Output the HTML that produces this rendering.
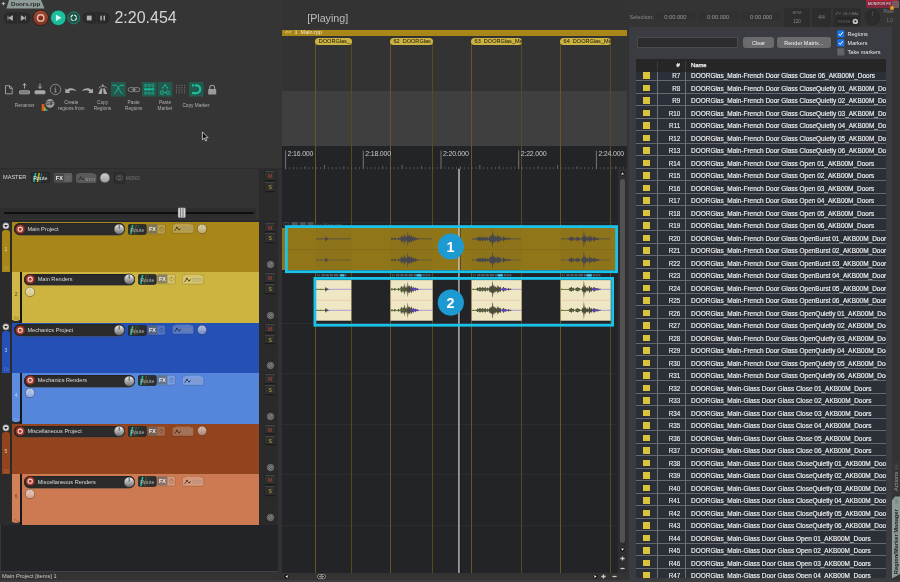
<!DOCTYPE html>
<html><head><meta charset="utf-8"><title>Doors.rpp</title>
<style>
html,body{margin:0;padding:0;background:#333;}
body{width:900px;height:582px;position:relative;overflow:hidden;font-family:"Liberation Sans",sans-serif;color:#ccc;}
.a{position:absolute;}
.t{position:absolute;white-space:nowrap;line-height:1;}
#w{position:absolute;left:0;top:0;width:900px;height:582px;will-change:transform;}
.pill{position:absolute;background:#2b2b2b;border-radius:7px;box-shadow:0 0.5px 0 #4a4a4a, inset 0 0.5px 1px #1c1c1c;}
.ms{position:absolute;width:10.2px;height:9.6px;background:#2f2f2f;border-top:0.6px solid #444;border-bottom:0.8px solid #1a1a1a;box-sizing:border-box;border-radius:1px;font-size:5px;line-height:8.4px;text-align:center;box-shadow:0 0 0 0.4px #222;}
.row{position:absolute;left:635.8px;width:250.2px;height:12.5px;background:#2b3038;border-bottom:1px solid #666a70;box-sizing:border-box;overflow:hidden;}
.row i{position:absolute;left:7.2px;top:3.4px;width:6.8px;height:6.5px;background:#d9c43c;}
.row b{position:absolute;left:21.4px;top:0;width:1px;height:13px;background:#6e7278;}
.row u{position:absolute;left:49.1px;top:0;width:1px;height:13px;background:#6e7278;}
.row s{position:absolute;right:205.8px;top:4.3px;font-size:6.3px;line-height:1;color:#ececec;text-decoration:none;-webkit-text-stroke:0.15px #ececec;}
.row em{position:absolute;left:55.2px;top:4.3px;font-size:6.47px;line-height:1;color:#f2f2f2;font-style:normal;white-space:nowrap;-webkit-text-stroke:0.15px #f2f2f2;}
.btn{position:absolute;border-radius:3px;box-sizing:border-box;}
</style></head><body><div id="w">

<div class="a" style="left:0;top:0;width:282px;height:168.6px;background:#353535;"></div>
<svg class="a" style="left:0;top:0" width="60" height="10"><path d="M6.5 8.5 L9 0 L41 0 L44.5 8.5 Z" fill="#8d9b98"/><path d="M1.6 3.6h3.6M3.4 1.8v3.6" stroke="#d0d0d0" stroke-width="0.8"/></svg>
<div class="t" style="left:11px;top:1.3px;font-size:6.1px;color:#262626;font-weight:bold;">Doors.rpp</div>
<svg class="a" style="left:0;top:8px" width="115" height="22">
<rect x="2.9" y="3.8" width="28.2" height="12.4" rx="6.2" fill="#2a2a2a" stroke="#3d3d3d" stroke-width="0.6"/>
<line x1="17.5" y1="5" x2="17.5" y2="16" stroke="#3a3a3a" stroke-width="0.5"/>
<path d="M8 7.7v4.6M8.8 10l3.6-2.3v4.6z" stroke="#b4b4b4" stroke-width="0.8" fill="#b4b4b4"/>
<path d="M25.6 7.7v4.6M24.8 10l-3.6-2.3v4.6z" stroke="#b4b4b4" stroke-width="0.8" fill="#b4b4b4"/>
<defs><linearGradient id="rg" x1="0" y1="0" x2="0" y2="1"><stop offset="0" stop-color="#a04a32"/><stop offset="1" stop-color="#7e3220"/></linearGradient></defs>
<circle cx="40.7" cy="9.9" r="7.8" fill="url(#rg)"/><circle cx="40.7" cy="9.9" r="7.8" fill="none" stroke="#261a16" stroke-width="0.8"/>
<circle cx="40.7" cy="9.9" r="3.2" fill="#8a2c1a" stroke="#e4c0b4" stroke-width="1.4"/>
<circle cx="58.3" cy="9.8" r="7.7" fill="#1bbf9d"/><circle cx="58.3" cy="9.8" r="7.7" fill="none" stroke="#2a2022" stroke-width="0.6"/>
<path d="M55.9 6.4l5.6 3.4-5.6 3.4z" fill="#e6faf4" fill-opacity=".92"/>
<circle cx="73.7" cy="9.8" r="6" fill="#215248" stroke="#1b8f78" stroke-width="0.8"/>
<circle cx="73.7" cy="9.8" r="2.8" fill="none" stroke="#dcebe7" stroke-width="1.2" stroke-dasharray="3.4 1 3.4 1"/>
<rect x="81.7" y="3.8" width="28.7" height="12.4" rx="6.2" fill="#2a2a2a" stroke="#3d3d3d" stroke-width="0.6"/>
<line x1="96.3" y1="5" x2="96.3" y2="16" stroke="#3a3a3a" stroke-width="0.5"/>
<rect x="86.8" y="7.6" width="4.8" height="4.8" fill="#b0b0b0"/>
<rect x="100.3" y="7.6" width="1.5" height="4.8" fill="#b0b0b0"/><rect x="103.5" y="7.6" width="1.5" height="4.8" fill="#b0b0b0"/>
</svg>
<div class="t" style="left:114.4px;top:10.4px;font-size:16px;color:#d4d4d4;">2:20.454</div>
<svg class="a" style="left:0;top:80px" width="225" height="20" fill="none" stroke="#a8a8a8" stroke-width="0.9">
<path d="M5.5 5.7h4.3l2.4 2.4v5.7H5.5z"/><path d="M9.6 5.9v2.4h2.4"/>
<path d="M24.5 3.5v5M22.7 5.5l1.8-2 1.8 2" stroke-width="1"/><rect x="19.5" y="10.8" width="10" height="3" rx="0.6" fill="#777"/>
<path d="M40 3.5v5M38.2 6.5l1.8 2 1.8-2" stroke-width="1"/><rect x="35" y="10.8" width="10" height="3" rx="0.6" fill="#aaa"/>
<circle cx="55.5" cy="9.5" r="5.2" stroke-width="0.7"/><path d="M55.5 6.6v0.8M54.6 8.8h1v3M54.4 12h2.2" stroke-width="0.8"/>
<path d="M65.3 8.4V12.9H70.2L68.7 11.4C70.6 9.9 73.6 9.7 76.4 11.2C74.2 8 70 7.4 67 9.8Z" fill="#a8a8a8" stroke="none"/>
<path d="M93 8.4V12.9H88.1L89.6 11.4C87.7 9.9 84.7 9.7 81.9 11.2C84.1 8 88.3 7.4 91.3 9.8Z" fill="#a8a8a8" stroke="none"/>
<path d="M100.8 8.2l-2.6 5.8h3.7l0.5-5.5zM104.7 8.2l2.6 5.8h-3.7l-0.5-5.5z" fill="#a8a8a8" stroke="none"/><path d="M98.5 8.3c1.5-2.5 7-2.5 8.5 0" stroke-width="0.8"/><circle cx="102.7" cy="5.2" r="0.9" fill="#a8a8a8" stroke="none"/>
<rect x="111" y="2" width="14.6" height="14.6" fill="#245a4e" stroke="none"/>
<path d="M112.5 5.3h3c3 0 4.5 8.3 7 8.3M124 5.3h-3c-3 0-4.5 8.3-7 8.3" stroke="#1bbf9d" stroke-width="0.9"/>
<rect x="128.2" y="7.6" width="6.6" height="4" rx="2" stroke="#949494" stroke-width="0.8"/><rect x="133.2" y="7.6" width="6.6" height="4" rx="2" stroke="#949494" stroke-width="0.8"/><path d="M131.5 9.6h5" stroke="#949494" stroke-width="0.7"/>
<rect x="142" y="2" width="14.6" height="14.6" fill="#245a4e" stroke="none"/>
<g fill="none" stroke="#1bbf9d" stroke-width="0.7"><rect x="144.6" y="4.3" width="2.1" height="2.1" rx="0.5"/><rect x="144.6" y="8.2" width="2.1" height="2.1" rx="0.5"/><rect x="144.6" y="12.1" width="2.1" height="2.1" rx="0.5"/><rect x="148.2" y="4.3" width="2.1" height="2.1" rx="0.5"/><rect x="148.2" y="8.2" width="2.1" height="2.1" rx="0.5"/><rect x="148.2" y="12.1" width="2.1" height="2.1" rx="0.5"/><rect x="151.8" y="4.3" width="2.1" height="2.1" rx="0.5"/><rect x="151.8" y="8.2" width="2.1" height="2.1" rx="0.5"/><rect x="151.8" y="12.1" width="2.1" height="2.1" rx="0.5"/><path d="M144.6 9.25h9.3" stroke-width="1.3"/></g>
<rect x="157.8" y="2" width="14.6" height="14.6" fill="#245a4e" stroke="none"/>
<g stroke="#1bbf9d" stroke-width="0.8"><circle cx="162" cy="12.6" r="1.7"/><circle cx="168" cy="12.6" r="1.7"/><path d="M163.7 12.6h2.6" /><path d="M162.6 7.9l2.4-2.8 2.4 2.8" stroke-width="0.9"/><circle cx="165" cy="5" r="0.8" fill="#1bbf9d" stroke="none"/><circle cx="162.6" cy="7.9" r="0.7" fill="#1bbf9d" stroke="none"/><circle cx="167.4" cy="7.9" r="0.7" fill="#1bbf9d" stroke="none"/></g>
<g stroke="#8a8a8a" stroke-width="0.8" stroke-dasharray="1 1.2"><path d="M176.5 5v9M179.2 5v9M181.9 5v9M184.6 5v9"/></g>
<rect x="189" y="2" width="14.6" height="14.6" fill="#245a4e" stroke="none"/>
<path d="M192 5.4h4.3a3.9 3.9 0 0 1 0 7.8H192" stroke="#1bbf9d" stroke-width="2.2" stroke-dasharray="2.2 0.8 30"/>
<rect x="208.2" y="9" width="8" height="5.6" rx="0.6" fill="#9a9a9a" stroke="none"/><path d="M209.8 9V7.6a2.4 2.4 0 0 1 4.8 0V9" stroke="#9a9a9a" stroke-width="1.1"/>
</svg>
<div class="t" style="left:-5.399999999999999px;width:60px;text-align:center;top:103.7px;font-size:4.75px;color:#b0b0b0;">Renamer</div>
<div class="t" style="left:41.3px;width:60px;text-align:center;top:100.7px;font-size:4.75px;color:#b0b0b0;">Create</div>
<div class="t" style="left:41.3px;width:60px;text-align:center;top:106.9px;font-size:4.75px;color:#b0b0b0;">regions from</div>
<div class="t" style="left:72.5px;width:60px;text-align:center;top:100.7px;font-size:4.75px;color:#b0b0b0;">Copy</div>
<div class="t" style="left:72.5px;width:60px;text-align:center;top:106.9px;font-size:4.75px;color:#b0b0b0;">Regions</div>
<div class="t" style="left:103.69999999999999px;width:60px;text-align:center;top:100.7px;font-size:4.75px;color:#b0b0b0;">Paste</div>
<div class="t" style="left:103.69999999999999px;width:60px;text-align:center;top:106.9px;font-size:4.75px;color:#b0b0b0;">Regions</div>
<div class="t" style="left:135px;width:60px;text-align:center;top:100.7px;font-size:4.75px;color:#b0b0b0;">Paste</div>
<div class="t" style="left:135px;width:60px;text-align:center;top:106.9px;font-size:4.75px;color:#b0b0b0;">Marker</div>
<div class="t" style="left:166px;width:60px;text-align:center;top:103.7px;font-size:4.75px;color:#b0b0b0;">Copy Marker</div>
<svg class="a" style="left:41px;top:98px" width="15" height="14"><defs><linearGradient id="rb" x1="0" x2="1"><stop offset="0" stop-color="#e03a1e"/><stop offset="0.3" stop-color="#f0c020"/><stop offset="0.55" stop-color="#38b040"/><stop offset="0.8" stop-color="#2070d0"/><stop offset="1" stop-color="#6030b0"/></linearGradient></defs>
<path d="M0.8 6v7h7z" fill="url(#rb)"/><path d="M0.8 6h2.5v7h-2.5z" fill="#e05a1e"/><circle cx="9" cy="5.5" r="4.4" fill="#9a9a9a"/><text x="9" y="7.2" font-size="4.6" fill="#333" text-anchor="middle" font-family="Liberation Sans, sans-serif" font-weight="bold">GIF</text></svg>
<svg class="a" style="left:200px;top:129px" width="12" height="16"><path d="M2.4 2.9v7.9l1.9-1.7 1.3 2.9 1.2-0.5-1.3-2.8h2.6z" fill="#0a0a0a" stroke="#e4e4e4" stroke-width="0.75" stroke-linejoin="round"/></svg>
<div class="a" style="left:0;top:168.2px;width:282px;height:0.8px;background:#2c2c2c;"></div>
<div class="a" style="left:0;top:169px;width:259px;height:50.5px;background:#333;"></div>
<div class="a" style="left:0;top:219.5px;width:277.6px;height:2.2px;background:#26282b;"></div>
<div class="t" style="left:3px;top:174.5px;font-size:5.6px;color:#d8d8d8;">MASTER</div>
<svg class="a" style="left:31px;top:172.4px" width="19" height="12"><rect x="0.3" y="0.3" width="18" height="10.2" rx="1.8" fill="#2c2f2e" stroke="#1c1c1c" stroke-width="0.6"/>
<path d="M4.7 0.8l-1.9 9.4" stroke="#1bbf9d" stroke-width="1.5"/><path d="M8.3 0.8l-1.9 9.4" stroke="#d4b81e" stroke-width="1.4"/><path d="M10.8 0.8l-1.9 9.4" stroke="#1e6f98" stroke-width="1"/>
<text x="9.3" y="7.6" font-size="5.3" fill="#e8e8e8" text-anchor="middle" font-family="Liberation Sans, sans-serif">Route</text></svg>
<svg class="a" style="left:53.5px;top:173.4px" width="19" height="10"><rect x="0.3" y="0.3" width="17.6" height="8.8" rx="1.4" fill="#5e5e5e" stroke="#707070" stroke-width="0.5"/><path d="M0.6 1.2q0-0.6 0.6-0.6h8.8v8.2h-8.8q-0.6 0-0.6-0.6z" fill="#484848"/>
<text x="5.3" y="6.8" font-size="5.4" fill="#eee" text-anchor="middle" font-weight="bold" font-family="Liberation Sans, sans-serif">FX</text><circle cx="14" cy="4.9" r="1.8" fill="none" stroke="#787878" stroke-width="0.6"/><path d="M14 2.6v1.9" stroke="#787878" stroke-width="0.6"/></svg>
<svg class="a" style="left:75.5px;top:173px" width="22" height="11"><path d="M0.4 2.2q0-1 1-1h1.5l0.7-0.9h13.2l0.7 0.9h1.5q1 0 1 1v6.2q0 1-1 1h-17.6q-1 0-1-1z" fill="#5a5a5a" stroke="#6c6c6c" stroke-width="0.5"/>
<path d="M2.3 7.4l2.3-3 2 2 1.8-1.3" fill="none" stroke="#2a2a2a" stroke-width="0.9"/><circle cx="4.6" cy="4.4" r="0.8" fill="#2a2a2a"/><circle cx="6.6" cy="6.4" r="0.7" fill="#2a2a2a"/>
<text x="14.3" y="7.5" font-size="6.2" fill="#8e8e8e" text-anchor="middle" font-family="Liberation Sans, sans-serif">trim</text></svg>
<svg class="a" style="left:99.39999999999999px;top:172.0px" width="11.8" height="11.8"><defs><linearGradient id="k1053_1779" x1="0" y1="0" x2="0" y2="1"><stop offset="0" stop-color="#d2d2d2"/><stop offset="1" stop-color="#9c9c9c"/></linearGradient></defs><circle cx="5.9" cy="5.9" r="4.9" fill="url(#k1053_1779)" stroke="#4a4a4a" stroke-width="0.6"/></svg>
<svg class="a" style="left:113.8px;top:171.7px" width="12" height="13"><rect x="0.4" y="0.4" width="10.2" height="11" rx="1.5" fill="#2e2e2e" stroke="#262626" stroke-width="0.6"/><circle cx="4.4" cy="5.9" r="2.2" fill="none" stroke="#707070" stroke-width="0.6"/><circle cx="6.6" cy="5.9" r="2.2" fill="none" stroke="#707070" stroke-width="0.6"/></svg>
<div class="t" style="left:126px;top:176.8px;font-size:4.5px;color:#787878;">MONO</div>
<div class="a" style="left:0px;top:207.5px;width:256.3px;height:11.4px;background:#2d2d2d;"></div>
<div class="a" style="left:4px;top:212.3px;width:250px;height:1.6px;background:#0e0e0e;border-radius:1px;"></div>
<svg class="a" style="left:177px;top:207px" width="10" height="12"><rect x="1" y="0.8" width="7.6" height="10" rx="1" fill="#d6d6d6" stroke="#555" stroke-width="0.5"/><path d="M3.6 1.5v8.6M6 1.5v8.6" stroke="#444" stroke-width="0.7"/></svg>
<div class="a" style="left:259px;top:169px;width:18.6px;height:50.5px;background:#2b2b2b;"></div>
<div class="a" style="left:259px;top:221.7px;width:18.6px;height:303.5px;background:#2a2a2a;"></div>
<div class="a" style="left:259px;top:525.2px;width:18.6px;height:45.6px;background:#222428;"></div>
<div class="a" style="left:277.6px;top:169px;width:4.4px;height:413px;background:#313131;"></div>
<div class="ms" style="left:265px;top:171.3px;color:#c0463a;">M</div>
<div class="ms" style="left:265px;top:182.10000000000002px;color:#c4b03a;">S</div>
<div class="a" style="left:0;top:221.7px;width:12px;height:303.5px;background:#2b2b2b;"></div>
<div class="a" style="left:12px;top:221.7px;width:247px;height:50.55px;background:#a88618;"></div>
<div class="a" style="left:1.5px;top:230.2px;width:8.8px;height:42.05px;background:#a88618;border-radius:3px 3px 0 0;"></div>
<div class="t" style="left:1.5px;width:8.8px;text-align:center;top:246.89999999999998px;font-size:5px;color:rgba(255,255,255,.7);">1</div>
<svg class="a" style="left:3.6px;top:266.3px" width="5" height="4"><path d="M0.4 0.6h1.4l0.5 0.6h1.9v2.1h-3.8z" fill="none" stroke="#fff" stroke-opacity=".3" stroke-width="0.45"/></svg>
<svg class="a" style="left:1.5px;top:222.0px" width="8" height="8"><circle cx="3.9" cy="3.9" r="3.3" fill="#ddd" stroke="#222" stroke-width="0.5"/><path d="M2.1 2.9h3.6L3.9 5.6z" fill="#222"/></svg>
<div class="pill" style="left:14px;top:223.29999999999998px;width:110.5px;height:11.6px;"></div>
<svg class="a" style="left:15px;top:223.6px" width="11" height="11"><circle cx="5.2" cy="5.2" r="4.8" fill="#a63a2c" stroke="#3a1a14" stroke-width="0.6"/><circle cx="5.2" cy="5.2" r="2.1" fill="none" stroke="#f0d8d2" stroke-width="1.1"/></svg>
<div class="t" style="left:27.4px;top:226.79999999999998px;font-size:5.6px;color:#dcdcdc;">Main Project</div>
<svg class="a" style="left:112.8px;top:222.9px" width="12.4" height="12.4"><defs><linearGradient id="k1190_2291" x1="0" y1="0" x2="0" y2="1"><stop offset="0" stop-color="#f2f2f2"/><stop offset="1" stop-color="#6a6a6a"/></linearGradient></defs><circle cx="6.2" cy="6.2" r="5.2" fill="url(#k1190_2291)" stroke="#222" stroke-width="0.6"/><path d="M6.2 1.5v4.2" stroke="#333" stroke-width="0.8"/></svg>
<svg class="a" style="left:128px;top:223.6px" width="19" height="12"><rect x="0.3" y="0.3" width="18" height="10.2" rx="1.8" fill="#2c2f2e" stroke="#1c1c1c" stroke-width="0.6"/>
<path d="M4.7 0.8l-1.9 9.4" stroke="#1bbf9d" stroke-width="1.5"/><path d="M8.3 0.8l-1.9 9.4" stroke="#6e5c1c" stroke-width="1.4" stroke-dasharray="1.6 0.9"/><path d="M10.8 0.8l-1.9 9.4" stroke="#27506a" stroke-width="1" stroke-dasharray="1.6 0.9"/>
<text x="9.3" y="7.6" font-size="5.3" fill="#b4b4b4" text-anchor="middle" font-family="Liberation Sans, sans-serif">Route</text></svg>
<svg class="a" style="left:146.8px;top:223.7px" width="19" height="12"><rect x="0.3" y="0.3" width="18" height="9.6" rx="1.5" fill="#fff" fill-opacity=".2" stroke="#000" stroke-opacity=".25" stroke-width="0.6"/><path d="M0.6 1.2q0-0.6 0.6-0.6h9.2v9h-9.2q-0.6 0-0.6-0.6z" fill="#5a5a5a" fill-opacity=".62"/>
<text x="5.4" y="7.2" font-size="5.4" fill="#ececec" text-anchor="middle" font-weight="bold" font-family="Liberation Sans, sans-serif">FX</text><circle cx="14.5" cy="5.3" r="1.9" fill="none" stroke="#000" stroke-opacity=".28" stroke-width="0.6"/><path d="M14.5 2.8v2" stroke="#000" stroke-opacity=".28" stroke-width="0.6"/></svg>
<svg class="a" style="left:172px;top:223.29999999999998px" width="23" height="12"><path d="M0.4 2.2q0-1 1-1h1.6l0.8-0.9h14.6l0.8 0.9h1.5q1 0 1 1v6.9q0 1-1 1h-19.3q-1 0-1-1z" fill="#fff" fill-opacity=".22" stroke="#000" stroke-opacity=".25" stroke-width="0.6"/>
<path d="M2.5 8l2.4-3.4 2.1 2.2 1.9-1.4" fill="none" stroke="#222" stroke-opacity=".75" stroke-width="0.9"/><circle cx="4.9" cy="4.6" r="0.85" fill="#222" fill-opacity=".8"/><circle cx="7" cy="6.8" r="0.7" fill="#222" fill-opacity=".8"/>
<text x="15.3" y="7.9" font-size="6.4" fill="#8c8c8c" fill-opacity=".62" text-anchor="middle" font-family="Liberation Sans, sans-serif">trim</text></svg>
<svg class="a" style="left:196.2px;top:223.2px" width="12" height="12"><defs><linearGradient id="pg1" x1="0" y1="0" x2="0" y2="1"><stop offset="0" stop-color="#fff" stop-opacity=".7"/><stop offset="1" stop-color="#ddd" stop-opacity=".38"/></linearGradient></defs><circle cx="6" cy="6" r="4.7" fill="url(#pg1)" stroke="#000" stroke-opacity=".42" stroke-width="0.7"/><path d="M6 2v3" stroke="#000" stroke-opacity=".2" stroke-width="0.8"/></svg>
<div class="ms" style="left:265px;top:222.6px;color:#c0463a;">M</div>
<div class="ms" style="left:265px;top:233.4px;color:#c4b03a;">S</div>
<svg class="a" style="left:265.9px;top:260.3px" width="9" height="9"><circle cx="4.5" cy="4.5" r="3.2" fill="#545454" stroke="#969696" stroke-width="0.55"/><circle cx="4.5" cy="4.5" r="1.7" fill="none" stroke="#c8c8c8" stroke-opacity=".55" stroke-width="0.55"/><path d="M3 6l3-3" stroke="#d8d8d8" stroke-opacity=".6" stroke-width="0.55"/></svg>
<div class="a" style="left:12px;top:272.25px;width:247px;height:50.55px;background:#cdb440;"></div>
<div class="a" style="left:12px;top:319.8px;width:8.3px;height:3px;background:#2b2b2b;"></div>
<div class="a" style="left:12px;top:272.25px;width:8.3px;height:48.949999999999996px;background:#cfb848;border-radius:0 0 3.5px 3.5px;"></div>
<div class="a" style="left:20.3px;top:272.25px;width:1.8px;height:50.55px;background:#16181c;"></div>
<div class="t" style="left:12px;width:8.3px;text-align:center;top:292.05px;font-size:5px;color:rgba(50,45,20,.8);">2</div>
<svg class="a" style="left:14px;top:316.45px" width="5" height="4"><path d="M0.4 0.6h1.4l0.5 0.6h1.9v2.1h-3.8z" fill="none" stroke="rgba(50,45,20,.8)" stroke-opacity=".6" stroke-width="0.45"/></svg>
<div class="pill" style="left:24.3px;top:273.85px;width:110.5px;height:11.6px;"></div>
<svg class="a" style="left:25.3px;top:274.15px" width="11" height="11"><circle cx="5.2" cy="5.2" r="4.8" fill="#a63a2c" stroke="#3a1a14" stroke-width="0.6"/><circle cx="5.2" cy="5.2" r="2.1" fill="none" stroke="#f0d8d2" stroke-width="1.1"/></svg>
<div class="t" style="left:37.7px;top:277.35px;font-size:5.6px;color:#dcdcdc;">Main Renders</div>
<svg class="a" style="left:123.10000000000001px;top:273.45px" width="12.4" height="12.4"><defs><linearGradient id="k1293_2796" x1="0" y1="0" x2="0" y2="1"><stop offset="0" stop-color="#f2f2f2"/><stop offset="1" stop-color="#6a6a6a"/></linearGradient></defs><circle cx="6.2" cy="6.2" r="5.2" fill="url(#k1293_2796)" stroke="#222" stroke-width="0.6"/><path d="M6.2 1.5v4.2" stroke="#333" stroke-width="0.8"/></svg>
<svg class="a" style="left:138.3px;top:274.15px" width="19" height="12"><rect x="0.3" y="0.3" width="18" height="10.2" rx="1.8" fill="#2c2f2e" stroke="#1c1c1c" stroke-width="0.6"/>
<path d="M4.7 0.8l-1.9 9.4" stroke="#1bbf9d" stroke-width="1.5"/><path d="M8.3 0.8l-1.9 9.4" stroke="#6e5c1c" stroke-width="1.4" stroke-dasharray="1.6 0.9"/><path d="M10.8 0.8l-1.9 9.4" stroke="#27506a" stroke-width="1" stroke-dasharray="1.6 0.9"/>
<text x="9.3" y="7.6" font-size="5.3" fill="#b4b4b4" text-anchor="middle" font-family="Liberation Sans, sans-serif">Route</text></svg>
<svg class="a" style="left:157.10000000000002px;top:274.25px" width="19" height="12"><rect x="0.3" y="0.3" width="18" height="9.6" rx="1.5" fill="#fff" fill-opacity=".2" stroke="#000" stroke-opacity=".25" stroke-width="0.6"/><path d="M0.6 1.2q0-0.6 0.6-0.6h9.2v9h-9.2q-0.6 0-0.6-0.6z" fill="#5a5a5a" fill-opacity=".62"/>
<text x="5.4" y="7.2" font-size="5.4" fill="#ececec" text-anchor="middle" font-weight="bold" font-family="Liberation Sans, sans-serif">FX</text><circle cx="14.5" cy="5.3" r="1.9" fill="none" stroke="#000" stroke-opacity=".28" stroke-width="0.6"/><path d="M14.5 2.8v2" stroke="#000" stroke-opacity=".28" stroke-width="0.6"/></svg>
<svg class="a" style="left:182.3px;top:273.85px" width="23" height="12"><path d="M0.4 2.2q0-1 1-1h1.6l0.8-0.9h14.6l0.8 0.9h1.5q1 0 1 1v6.9q0 1-1 1h-19.3q-1 0-1-1z" fill="#fff" fill-opacity=".22" stroke="#000" stroke-opacity=".25" stroke-width="0.6"/>
<path d="M2.5 8l2.4-3.4 2.1 2.2 1.9-1.4" fill="none" stroke="#222" stroke-opacity=".75" stroke-width="0.9"/><circle cx="4.9" cy="4.6" r="0.85" fill="#222" fill-opacity=".8"/><circle cx="7" cy="6.8" r="0.7" fill="#222" fill-opacity=".8"/>
<text x="15.3" y="7.9" font-size="6.4" fill="#8c8c8c" fill-opacity=".62" text-anchor="middle" font-family="Liberation Sans, sans-serif">trim</text></svg>
<svg class="a" style="left:24px;top:285.65px" width="12" height="12"><defs><linearGradient id="pg2" x1="0" y1="0" x2="0" y2="1"><stop offset="0" stop-color="#fff" stop-opacity=".7"/><stop offset="1" stop-color="#ddd" stop-opacity=".38"/></linearGradient></defs><circle cx="6" cy="6" r="4.7" fill="url(#pg2)" stroke="#000" stroke-opacity=".42" stroke-width="0.7"/><path d="M6 2v3" stroke="#000" stroke-opacity=".2" stroke-width="0.8"/></svg>
<div class="ms" style="left:265px;top:273.15px;color:#c0463a;">M</div>
<div class="ms" style="left:265px;top:283.95px;color:#c4b03a;">S</div>
<svg class="a" style="left:265.9px;top:310.85px" width="9" height="9"><circle cx="4.5" cy="4.5" r="3.2" fill="#545454" stroke="#969696" stroke-width="0.55"/><circle cx="4.5" cy="4.5" r="1.7" fill="none" stroke="#c8c8c8" stroke-opacity=".55" stroke-width="0.55"/><path d="M3 6l3-3" stroke="#d8d8d8" stroke-opacity=".6" stroke-width="0.55"/></svg>
<div class="a" style="left:12px;top:322.8px;width:247px;height:50.55px;background:#2551b7;"></div>
<div class="a" style="left:1.5px;top:331.3px;width:8.8px;height:42.05px;background:#2551b7;border-radius:3px 3px 0 0;"></div>
<div class="t" style="left:1.5px;width:8.8px;text-align:center;top:348.0px;font-size:5px;color:rgba(255,255,255,.7);">3</div>
<svg class="a" style="left:3.6px;top:367.40000000000003px" width="5" height="4"><path d="M0.4 0.6h1.4l0.5 0.6h1.9v2.1h-3.8z" fill="none" stroke="#fff" stroke-opacity=".3" stroke-width="0.45"/></svg>
<svg class="a" style="left:1.5px;top:323.1px" width="8" height="8"><circle cx="3.9" cy="3.9" r="3.3" fill="#ddd" stroke="#222" stroke-width="0.5"/><path d="M2.1 2.9h3.6L3.9 5.6z" fill="#222"/></svg>
<div class="pill" style="left:14px;top:324.40000000000003px;width:110.5px;height:11.6px;"></div>
<svg class="a" style="left:15px;top:324.7px" width="11" height="11"><circle cx="5.2" cy="5.2" r="4.8" fill="#a63a2c" stroke="#3a1a14" stroke-width="0.6"/><circle cx="5.2" cy="5.2" r="2.1" fill="none" stroke="#f0d8d2" stroke-width="1.1"/></svg>
<div class="t" style="left:27.4px;top:327.90000000000003px;font-size:5.6px;color:#dcdcdc;">Mechanics Project</div>
<svg class="a" style="left:112.8px;top:324.0px" width="12.4" height="12.4"><defs><linearGradient id="k1190_3302" x1="0" y1="0" x2="0" y2="1"><stop offset="0" stop-color="#f2f2f2"/><stop offset="1" stop-color="#6a6a6a"/></linearGradient></defs><circle cx="6.2" cy="6.2" r="5.2" fill="url(#k1190_3302)" stroke="#222" stroke-width="0.6"/><path d="M6.2 1.5v4.2" stroke="#333" stroke-width="0.8"/></svg>
<svg class="a" style="left:128px;top:324.7px" width="19" height="12"><rect x="0.3" y="0.3" width="18" height="10.2" rx="1.8" fill="#2c2f2e" stroke="#1c1c1c" stroke-width="0.6"/>
<path d="M4.7 0.8l-1.9 9.4" stroke="#1bbf9d" stroke-width="1.5"/><path d="M8.3 0.8l-1.9 9.4" stroke="#6e5c1c" stroke-width="1.4" stroke-dasharray="1.6 0.9"/><path d="M10.8 0.8l-1.9 9.4" stroke="#27506a" stroke-width="1" stroke-dasharray="1.6 0.9"/>
<text x="9.3" y="7.6" font-size="5.3" fill="#b4b4b4" text-anchor="middle" font-family="Liberation Sans, sans-serif">Route</text></svg>
<svg class="a" style="left:146.8px;top:324.8px" width="19" height="12"><rect x="0.3" y="0.3" width="18" height="9.6" rx="1.5" fill="#fff" fill-opacity=".2" stroke="#000" stroke-opacity=".25" stroke-width="0.6"/><path d="M0.6 1.2q0-0.6 0.6-0.6h9.2v9h-9.2q-0.6 0-0.6-0.6z" fill="#5a5a5a" fill-opacity=".62"/>
<text x="5.4" y="7.2" font-size="5.4" fill="#ececec" text-anchor="middle" font-weight="bold" font-family="Liberation Sans, sans-serif">FX</text><circle cx="14.5" cy="5.3" r="1.9" fill="none" stroke="#000" stroke-opacity=".28" stroke-width="0.6"/><path d="M14.5 2.8v2" stroke="#000" stroke-opacity=".28" stroke-width="0.6"/></svg>
<svg class="a" style="left:172px;top:324.40000000000003px" width="23" height="12"><path d="M0.4 2.2q0-1 1-1h1.6l0.8-0.9h14.6l0.8 0.9h1.5q1 0 1 1v6.9q0 1-1 1h-19.3q-1 0-1-1z" fill="#fff" fill-opacity=".22" stroke="#000" stroke-opacity=".25" stroke-width="0.6"/>
<path d="M2.5 8l2.4-3.4 2.1 2.2 1.9-1.4" fill="none" stroke="#222" stroke-opacity=".75" stroke-width="0.9"/><circle cx="4.9" cy="4.6" r="0.85" fill="#222" fill-opacity=".8"/><circle cx="7" cy="6.8" r="0.7" fill="#222" fill-opacity=".8"/>
<text x="15.3" y="7.9" font-size="6.4" fill="#8c8c8c" fill-opacity=".62" text-anchor="middle" font-family="Liberation Sans, sans-serif">trim</text></svg>
<svg class="a" style="left:196.2px;top:324.3px" width="12" height="12"><defs><linearGradient id="pg3" x1="0" y1="0" x2="0" y2="1"><stop offset="0" stop-color="#fff" stop-opacity=".7"/><stop offset="1" stop-color="#ddd" stop-opacity=".38"/></linearGradient></defs><circle cx="6" cy="6" r="4.7" fill="url(#pg3)" stroke="#000" stroke-opacity=".42" stroke-width="0.7"/><path d="M6 2v3" stroke="#000" stroke-opacity=".2" stroke-width="0.8"/></svg>
<div class="ms" style="left:265px;top:323.7px;color:#c0463a;">M</div>
<div class="ms" style="left:265px;top:334.5px;color:#c4b03a;">S</div>
<svg class="a" style="left:265.9px;top:361.40000000000003px" width="9" height="9"><circle cx="4.5" cy="4.5" r="3.2" fill="#545454" stroke="#969696" stroke-width="0.55"/><circle cx="4.5" cy="4.5" r="1.7" fill="none" stroke="#c8c8c8" stroke-opacity=".55" stroke-width="0.55"/><path d="M3 6l3-3" stroke="#d8d8d8" stroke-opacity=".6" stroke-width="0.55"/></svg>
<div class="a" style="left:12px;top:373.35px;width:247px;height:50.55px;background:#5685dc;"></div>
<div class="a" style="left:12px;top:420.90000000000003px;width:8.3px;height:3px;background:#2b2b2b;"></div>
<div class="a" style="left:12px;top:373.35px;width:8.3px;height:48.949999999999996px;background:#5d8be0;border-radius:0 0 3.5px 3.5px;"></div>
<div class="a" style="left:20.3px;top:373.35px;width:1.8px;height:50.55px;background:#16181c;"></div>
<div class="t" style="left:12px;width:8.3px;text-align:center;top:393.15000000000003px;font-size:5px;color:rgba(255,255,255,.6);">4</div>
<svg class="a" style="left:14px;top:417.55px" width="5" height="4"><path d="M0.4 0.6h1.4l0.5 0.6h1.9v2.1h-3.8z" fill="none" stroke="rgba(255,255,255,.6)" stroke-opacity=".6" stroke-width="0.45"/></svg>
<div class="pill" style="left:24.3px;top:374.95000000000005px;width:110.5px;height:11.6px;"></div>
<svg class="a" style="left:25.3px;top:375.25px" width="11" height="11"><circle cx="5.2" cy="5.2" r="4.8" fill="#a63a2c" stroke="#3a1a14" stroke-width="0.6"/><circle cx="5.2" cy="5.2" r="2.1" fill="none" stroke="#f0d8d2" stroke-width="1.1"/></svg>
<div class="t" style="left:37.7px;top:378.45000000000005px;font-size:5.6px;color:#dcdcdc;">Mechanics Renders</div>
<svg class="a" style="left:123.10000000000001px;top:374.55px" width="12.4" height="12.4"><defs><linearGradient id="k1293_3807" x1="0" y1="0" x2="0" y2="1"><stop offset="0" stop-color="#f2f2f2"/><stop offset="1" stop-color="#6a6a6a"/></linearGradient></defs><circle cx="6.2" cy="6.2" r="5.2" fill="url(#k1293_3807)" stroke="#222" stroke-width="0.6"/><path d="M6.2 1.5v4.2" stroke="#333" stroke-width="0.8"/></svg>
<svg class="a" style="left:138.3px;top:375.25px" width="19" height="12"><rect x="0.3" y="0.3" width="18" height="10.2" rx="1.8" fill="#2c2f2e" stroke="#1c1c1c" stroke-width="0.6"/>
<path d="M4.7 0.8l-1.9 9.4" stroke="#1bbf9d" stroke-width="1.5"/><path d="M8.3 0.8l-1.9 9.4" stroke="#6e5c1c" stroke-width="1.4" stroke-dasharray="1.6 0.9"/><path d="M10.8 0.8l-1.9 9.4" stroke="#27506a" stroke-width="1" stroke-dasharray="1.6 0.9"/>
<text x="9.3" y="7.6" font-size="5.3" fill="#b4b4b4" text-anchor="middle" font-family="Liberation Sans, sans-serif">Route</text></svg>
<svg class="a" style="left:157.10000000000002px;top:375.35px" width="19" height="12"><rect x="0.3" y="0.3" width="18" height="9.6" rx="1.5" fill="#fff" fill-opacity=".2" stroke="#000" stroke-opacity=".25" stroke-width="0.6"/><path d="M0.6 1.2q0-0.6 0.6-0.6h9.2v9h-9.2q-0.6 0-0.6-0.6z" fill="#5a5a5a" fill-opacity=".62"/>
<text x="5.4" y="7.2" font-size="5.4" fill="#ececec" text-anchor="middle" font-weight="bold" font-family="Liberation Sans, sans-serif">FX</text><circle cx="14.5" cy="5.3" r="1.9" fill="none" stroke="#000" stroke-opacity=".28" stroke-width="0.6"/><path d="M14.5 2.8v2" stroke="#000" stroke-opacity=".28" stroke-width="0.6"/></svg>
<svg class="a" style="left:182.3px;top:374.95000000000005px" width="23" height="12"><path d="M0.4 2.2q0-1 1-1h1.6l0.8-0.9h14.6l0.8 0.9h1.5q1 0 1 1v6.9q0 1-1 1h-19.3q-1 0-1-1z" fill="#fff" fill-opacity=".22" stroke="#000" stroke-opacity=".25" stroke-width="0.6"/>
<path d="M2.5 8l2.4-3.4 2.1 2.2 1.9-1.4" fill="none" stroke="#222" stroke-opacity=".75" stroke-width="0.9"/><circle cx="4.9" cy="4.6" r="0.85" fill="#222" fill-opacity=".8"/><circle cx="7" cy="6.8" r="0.7" fill="#222" fill-opacity=".8"/>
<text x="15.3" y="7.9" font-size="6.4" fill="#8c8c8c" fill-opacity=".62" text-anchor="middle" font-family="Liberation Sans, sans-serif">trim</text></svg>
<svg class="a" style="left:24px;top:386.75px" width="12" height="12"><defs><linearGradient id="pg4" x1="0" y1="0" x2="0" y2="1"><stop offset="0" stop-color="#fff" stop-opacity=".7"/><stop offset="1" stop-color="#ddd" stop-opacity=".38"/></linearGradient></defs><circle cx="6" cy="6" r="4.7" fill="url(#pg4)" stroke="#000" stroke-opacity=".42" stroke-width="0.7"/><path d="M6 2v3" stroke="#000" stroke-opacity=".2" stroke-width="0.8"/></svg>
<div class="ms" style="left:265px;top:374.25px;color:#c0463a;">M</div>
<div class="ms" style="left:265px;top:385.05px;color:#c4b03a;">S</div>
<svg class="a" style="left:265.9px;top:411.95000000000005px" width="9" height="9"><circle cx="4.5" cy="4.5" r="3.2" fill="#545454" stroke="#969696" stroke-width="0.55"/><circle cx="4.5" cy="4.5" r="1.7" fill="none" stroke="#c8c8c8" stroke-opacity=".55" stroke-width="0.55"/><path d="M3 6l3-3" stroke="#d8d8d8" stroke-opacity=".6" stroke-width="0.55"/></svg>
<div class="a" style="left:12px;top:423.9px;width:247px;height:50.55px;background:#91441e;"></div>
<div class="a" style="left:1.5px;top:432.4px;width:8.8px;height:42.05px;background:#91441e;border-radius:3px 3px 0 0;"></div>
<div class="t" style="left:1.5px;width:8.8px;text-align:center;top:449.09999999999997px;font-size:5px;color:rgba(255,255,255,.7);">5</div>
<svg class="a" style="left:3.6px;top:468.5px" width="5" height="4"><path d="M0.4 0.6h1.4l0.5 0.6h1.9v2.1h-3.8z" fill="none" stroke="#fff" stroke-opacity=".3" stroke-width="0.45"/></svg>
<svg class="a" style="left:1.5px;top:424.2px" width="8" height="8"><circle cx="3.9" cy="3.9" r="3.3" fill="#ddd" stroke="#222" stroke-width="0.5"/><path d="M2.1 2.9h3.6L3.9 5.6z" fill="#222"/></svg>
<div class="pill" style="left:14px;top:425.5px;width:110.5px;height:11.6px;"></div>
<svg class="a" style="left:15px;top:425.79999999999995px" width="11" height="11"><circle cx="5.2" cy="5.2" r="4.8" fill="#a63a2c" stroke="#3a1a14" stroke-width="0.6"/><circle cx="5.2" cy="5.2" r="2.1" fill="none" stroke="#f0d8d2" stroke-width="1.1"/></svg>
<div class="t" style="left:27.4px;top:429.0px;font-size:5.6px;color:#dcdcdc;">Miscellaneous Project</div>
<svg class="a" style="left:112.8px;top:425.09999999999997px" width="12.4" height="12.4"><defs><linearGradient id="k1190_4313" x1="0" y1="0" x2="0" y2="1"><stop offset="0" stop-color="#f2f2f2"/><stop offset="1" stop-color="#6a6a6a"/></linearGradient></defs><circle cx="6.2" cy="6.2" r="5.2" fill="url(#k1190_4313)" stroke="#222" stroke-width="0.6"/><path d="M6.2 1.5v4.2" stroke="#333" stroke-width="0.8"/></svg>
<svg class="a" style="left:128px;top:425.79999999999995px" width="19" height="12"><rect x="0.3" y="0.3" width="18" height="10.2" rx="1.8" fill="#2c2f2e" stroke="#1c1c1c" stroke-width="0.6"/>
<path d="M4.7 0.8l-1.9 9.4" stroke="#1bbf9d" stroke-width="1.5"/><path d="M8.3 0.8l-1.9 9.4" stroke="#6e5c1c" stroke-width="1.4" stroke-dasharray="1.6 0.9"/><path d="M10.8 0.8l-1.9 9.4" stroke="#27506a" stroke-width="1" stroke-dasharray="1.6 0.9"/>
<text x="9.3" y="7.6" font-size="5.3" fill="#b4b4b4" text-anchor="middle" font-family="Liberation Sans, sans-serif">Route</text></svg>
<svg class="a" style="left:146.8px;top:425.9px" width="19" height="12"><rect x="0.3" y="0.3" width="18" height="9.6" rx="1.5" fill="#fff" fill-opacity=".2" stroke="#000" stroke-opacity=".25" stroke-width="0.6"/><path d="M0.6 1.2q0-0.6 0.6-0.6h9.2v9h-9.2q-0.6 0-0.6-0.6z" fill="#5a5a5a" fill-opacity=".62"/>
<text x="5.4" y="7.2" font-size="5.4" fill="#ececec" text-anchor="middle" font-weight="bold" font-family="Liberation Sans, sans-serif">FX</text><circle cx="14.5" cy="5.3" r="1.9" fill="none" stroke="#000" stroke-opacity=".28" stroke-width="0.6"/><path d="M14.5 2.8v2" stroke="#000" stroke-opacity=".28" stroke-width="0.6"/></svg>
<svg class="a" style="left:172px;top:425.5px" width="23" height="12"><path d="M0.4 2.2q0-1 1-1h1.6l0.8-0.9h14.6l0.8 0.9h1.5q1 0 1 1v6.9q0 1-1 1h-19.3q-1 0-1-1z" fill="#fff" fill-opacity=".22" stroke="#000" stroke-opacity=".25" stroke-width="0.6"/>
<path d="M2.5 8l2.4-3.4 2.1 2.2 1.9-1.4" fill="none" stroke="#222" stroke-opacity=".75" stroke-width="0.9"/><circle cx="4.9" cy="4.6" r="0.85" fill="#222" fill-opacity=".8"/><circle cx="7" cy="6.8" r="0.7" fill="#222" fill-opacity=".8"/>
<text x="15.3" y="7.9" font-size="6.4" fill="#8c8c8c" fill-opacity=".62" text-anchor="middle" font-family="Liberation Sans, sans-serif">trim</text></svg>
<svg class="a" style="left:196.2px;top:425.4px" width="12" height="12"><defs><linearGradient id="pg5" x1="0" y1="0" x2="0" y2="1"><stop offset="0" stop-color="#fff" stop-opacity=".7"/><stop offset="1" stop-color="#ddd" stop-opacity=".38"/></linearGradient></defs><circle cx="6" cy="6" r="4.7" fill="url(#pg5)" stroke="#000" stroke-opacity=".42" stroke-width="0.7"/><path d="M6 2v3" stroke="#000" stroke-opacity=".2" stroke-width="0.8"/></svg>
<div class="ms" style="left:265px;top:424.79999999999995px;color:#c0463a;">M</div>
<div class="ms" style="left:265px;top:435.59999999999997px;color:#c4b03a;">S</div>
<svg class="a" style="left:265.9px;top:462.5px" width="9" height="9"><circle cx="4.5" cy="4.5" r="3.2" fill="#545454" stroke="#969696" stroke-width="0.55"/><circle cx="4.5" cy="4.5" r="1.7" fill="none" stroke="#c8c8c8" stroke-opacity=".55" stroke-width="0.55"/><path d="M3 6l3-3" stroke="#d8d8d8" stroke-opacity=".6" stroke-width="0.55"/></svg>
<div class="a" style="left:12px;top:474.45px;width:247px;height:50.55px;background:#cd7a52;"></div>
<div class="a" style="left:12px;top:522.0px;width:8.3px;height:3px;background:#2b2b2b;"></div>
<div class="a" style="left:12px;top:474.45px;width:8.3px;height:48.949999999999996px;background:#d28058;border-radius:0 0 3.5px 3.5px;"></div>
<div class="a" style="left:20.3px;top:474.45px;width:1.8px;height:50.55px;background:#16181c;"></div>
<div class="t" style="left:12px;width:8.3px;text-align:center;top:494.25px;font-size:5px;color:rgba(90,40,20,.75);">6</div>
<svg class="a" style="left:14px;top:518.65px" width="5" height="4"><path d="M0.4 0.6h1.4l0.5 0.6h1.9v2.1h-3.8z" fill="none" stroke="rgba(90,40,20,.75)" stroke-opacity=".6" stroke-width="0.45"/></svg>
<div class="pill" style="left:24.3px;top:476.05px;width:110.5px;height:11.6px;"></div>
<svg class="a" style="left:25.3px;top:476.34999999999997px" width="11" height="11"><circle cx="5.2" cy="5.2" r="4.8" fill="#a63a2c" stroke="#3a1a14" stroke-width="0.6"/><circle cx="5.2" cy="5.2" r="2.1" fill="none" stroke="#f0d8d2" stroke-width="1.1"/></svg>
<div class="t" style="left:37.7px;top:479.55px;font-size:5.6px;color:#dcdcdc;">Miscellaneous Renders</div>
<svg class="a" style="left:123.10000000000001px;top:475.65px" width="12.4" height="12.4"><defs><linearGradient id="k1293_4818" x1="0" y1="0" x2="0" y2="1"><stop offset="0" stop-color="#f2f2f2"/><stop offset="1" stop-color="#6a6a6a"/></linearGradient></defs><circle cx="6.2" cy="6.2" r="5.2" fill="url(#k1293_4818)" stroke="#222" stroke-width="0.6"/><path d="M6.2 1.5v4.2" stroke="#333" stroke-width="0.8"/></svg>
<svg class="a" style="left:138.3px;top:476.34999999999997px" width="19" height="12"><rect x="0.3" y="0.3" width="18" height="10.2" rx="1.8" fill="#2c2f2e" stroke="#1c1c1c" stroke-width="0.6"/>
<path d="M4.7 0.8l-1.9 9.4" stroke="#1bbf9d" stroke-width="1.5"/><path d="M8.3 0.8l-1.9 9.4" stroke="#6e5c1c" stroke-width="1.4" stroke-dasharray="1.6 0.9"/><path d="M10.8 0.8l-1.9 9.4" stroke="#27506a" stroke-width="1" stroke-dasharray="1.6 0.9"/>
<text x="9.3" y="7.6" font-size="5.3" fill="#b4b4b4" text-anchor="middle" font-family="Liberation Sans, sans-serif">Route</text></svg>
<svg class="a" style="left:157.10000000000002px;top:476.45px" width="19" height="12"><rect x="0.3" y="0.3" width="18" height="9.6" rx="1.5" fill="#fff" fill-opacity=".2" stroke="#000" stroke-opacity=".25" stroke-width="0.6"/><path d="M0.6 1.2q0-0.6 0.6-0.6h9.2v9h-9.2q-0.6 0-0.6-0.6z" fill="#5a5a5a" fill-opacity=".62"/>
<text x="5.4" y="7.2" font-size="5.4" fill="#ececec" text-anchor="middle" font-weight="bold" font-family="Liberation Sans, sans-serif">FX</text><circle cx="14.5" cy="5.3" r="1.9" fill="none" stroke="#000" stroke-opacity=".28" stroke-width="0.6"/><path d="M14.5 2.8v2" stroke="#000" stroke-opacity=".28" stroke-width="0.6"/></svg>
<svg class="a" style="left:182.3px;top:476.05px" width="23" height="12"><path d="M0.4 2.2q0-1 1-1h1.6l0.8-0.9h14.6l0.8 0.9h1.5q1 0 1 1v6.9q0 1-1 1h-19.3q-1 0-1-1z" fill="#fff" fill-opacity=".22" stroke="#000" stroke-opacity=".25" stroke-width="0.6"/>
<path d="M2.5 8l2.4-3.4 2.1 2.2 1.9-1.4" fill="none" stroke="#222" stroke-opacity=".75" stroke-width="0.9"/><circle cx="4.9" cy="4.6" r="0.85" fill="#222" fill-opacity=".8"/><circle cx="7" cy="6.8" r="0.7" fill="#222" fill-opacity=".8"/>
<text x="15.3" y="7.9" font-size="6.4" fill="#8c8c8c" fill-opacity=".62" text-anchor="middle" font-family="Liberation Sans, sans-serif">trim</text></svg>
<svg class="a" style="left:24px;top:487.84999999999997px" width="12" height="12"><defs><linearGradient id="pg6" x1="0" y1="0" x2="0" y2="1"><stop offset="0" stop-color="#fff" stop-opacity=".7"/><stop offset="1" stop-color="#ddd" stop-opacity=".38"/></linearGradient></defs><circle cx="6" cy="6" r="4.7" fill="url(#pg6)" stroke="#000" stroke-opacity=".42" stroke-width="0.7"/><path d="M6 2v3" stroke="#000" stroke-opacity=".2" stroke-width="0.8"/></svg>
<div class="ms" style="left:265px;top:475.34999999999997px;color:#c0463a;">M</div>
<div class="ms" style="left:265px;top:486.15px;color:#c4b03a;">S</div>
<svg class="a" style="left:265.9px;top:513.0500000000001px" width="9" height="9"><circle cx="4.5" cy="4.5" r="3.2" fill="#545454" stroke="#969696" stroke-width="0.55"/><circle cx="4.5" cy="4.5" r="1.7" fill="none" stroke="#c8c8c8" stroke-opacity=".55" stroke-width="0.55"/><path d="M3 6l3-3" stroke="#d8d8d8" stroke-opacity=".6" stroke-width="0.55"/></svg>
<div class="a" style="left:0;top:525.2px;width:259px;height:45.6px;background:#222428;"></div>
<div class="a" style="left:0;top:525.2px;width:1.2px;height:45.6px;background:#38383a;"></div>
<div class="a" style="left:0;top:570.8px;width:277.6px;height:11.2px;background:#333;border-top:1px solid #424242;box-sizing:border-box;"></div>
<div class="t" style="left:2px;top:574px;font-size:5.7px;color:#c8c8c8;">Main Project [items] 1</div>
<div class="a" style="left:282px;top:0;width:345px;height:29px;background:#333;"></div>
<div class="t" style="left:307.2px;top:13.2px;font-size:10.7px;color:#bdbdbd;">[Playing]</div>
<div class="a" style="left:282px;top:35.5px;width:344.7px;height:56px;background:#333;"></div>
<div class="a" style="left:282px;top:91px;width:344.7px;height:55.3px;background:#3f3f3f;"></div>
<div class="a" style="left:282px;top:146.3px;width:344.7px;height:22.4px;background:#222428;"></div>
<div class="a" style="left:282px;top:168.7px;width:336.3px;height:404.3px;background:#222428;"></div>
<div class="a" style="left:282px;top:29.6px;width:345.3px;height:6px;background:#a88618;"></div>
<div class="t" style="left:285px;top:30.3px;font-size:5.5px;color:#f4ecd0;">&lt;&lt;&nbsp; 1&nbsp; Main.rpp</div>
<div class="a" style="left:282px;top:221.5px;width:335px;height:1px;background:#2b2d31;"></div>
<div class="a" style="left:282px;top:272px;width:335px;height:1px;background:#2b2d31;"></div>
<div class="a" style="left:282px;top:322.5px;width:335px;height:1px;background:#2b2d31;"></div>
<div class="a" style="left:282px;top:373px;width:335px;height:1px;background:#2b2d31;"></div>
<div class="a" style="left:282px;top:423.5px;width:335px;height:1px;background:#2b2d31;"></div>
<div class="a" style="left:282px;top:474px;width:335px;height:1px;background:#2b2d31;"></div>
<div class="a" style="left:282px;top:524.5px;width:335px;height:1px;background:#2b2d31;"></div>
<div class="a" style="left:315.3px;top:41px;width:1px;height:532px;background:#65571f;"></div>
<div class="a" style="left:350.8px;top:41px;width:1px;height:532px;background:#564b1e;"></div>
<div class="a" style="left:315.2px;top:37.5px;width:36.7px;height:7.8px;background:#cdb440;border-radius:3.5px;overflow:hidden;"><div class="t" style="left:3.6px;top:1.2px;font-size:5.55px;color:#111;">DOORGlas_</div></div>
<div class="a" style="left:390.0px;top:41px;width:1px;height:532px;background:#65571f;"></div>
<div class="a" style="left:432.1px;top:41px;width:1px;height:532px;background:#564b1e;"></div>
<div class="a" style="left:389.9px;top:37.5px;width:43.300000000000026px;height:7.8px;background:#cdb440;border-radius:3.5px;overflow:hidden;"><div class="t" style="left:3.6px;top:1.2px;font-size:5.55px;color:#111;">62&nbsp; DOORGlas</div></div>
<div class="a" style="left:471.1px;top:41px;width:1px;height:532px;background:#65571f;"></div>
<div class="a" style="left:521.1px;top:41px;width:1px;height:532px;background:#564b1e;"></div>
<div class="a" style="left:471.0px;top:37.5px;width:51.2px;height:7.8px;background:#cdb440;border-radius:3.5px;overflow:hidden;"><div class="t" style="left:3.6px;top:1.2px;font-size:5.55px;color:#111;">63&nbsp; DOORGlas_Ma</div></div>
<div class="a" style="left:560.1px;top:41px;width:1px;height:532px;background:#65571f;"></div>
<div class="a" style="left:610.2px;top:41px;width:1px;height:532px;background:#564b1e;"></div>
<div class="a" style="left:560.0px;top:37.5px;width:51.300000000000026px;height:7.8px;background:#cdb440;border-radius:3.5px;overflow:hidden;"><div class="t" style="left:3.6px;top:1.2px;font-size:5.55px;color:#111;">64&nbsp; DOORGlas_Ma</div></div>
<svg class="a" style="left:282px;top:146.5px" width="345" height="24"><path d="M3.60 3.5V22.2" stroke="#8c8c8c" stroke-width="0.8"/><path d="M7.49 20V22.2" stroke="#6c6c6c" stroke-width="0.6"/><path d="M11.37 20V22.2" stroke="#6c6c6c" stroke-width="0.6"/><path d="M15.26 20V22.2" stroke="#6c6c6c" stroke-width="0.6"/><path d="M19.14 20V22.2" stroke="#6c6c6c" stroke-width="0.6"/><path d="M23.03 19.2V22.2" stroke="#808080" stroke-width="0.7"/><path d="M26.91 20V22.2" stroke="#6c6c6c" stroke-width="0.6"/><path d="M30.80 20V22.2" stroke="#6c6c6c" stroke-width="0.6"/><path d="M34.68 20V22.2" stroke="#6c6c6c" stroke-width="0.6"/><path d="M38.57 20V22.2" stroke="#6c6c6c" stroke-width="0.6"/><path d="M42.45 18V22.2" stroke="#858585" stroke-width="0.7"/><path d="M46.34 20V22.2" stroke="#6c6c6c" stroke-width="0.6"/><path d="M50.22 20V22.2" stroke="#6c6c6c" stroke-width="0.6"/><path d="M54.11 20V22.2" stroke="#6c6c6c" stroke-width="0.6"/><path d="M57.99 20V22.2" stroke="#6c6c6c" stroke-width="0.6"/><path d="M61.88 19.2V22.2" stroke="#808080" stroke-width="0.7"/><path d="M65.76 20V22.2" stroke="#6c6c6c" stroke-width="0.6"/><path d="M69.65 20V22.2" stroke="#6c6c6c" stroke-width="0.6"/><path d="M73.53 20V22.2" stroke="#6c6c6c" stroke-width="0.6"/><path d="M77.42 20V22.2" stroke="#6c6c6c" stroke-width="0.6"/><path d="M81.30 3.5V22.2" stroke="#8c8c8c" stroke-width="0.8"/><path d="M85.19 20V22.2" stroke="#6c6c6c" stroke-width="0.6"/><path d="M89.07 20V22.2" stroke="#6c6c6c" stroke-width="0.6"/><path d="M92.96 20V22.2" stroke="#6c6c6c" stroke-width="0.6"/><path d="M96.84 20V22.2" stroke="#6c6c6c" stroke-width="0.6"/><path d="M100.73 19.2V22.2" stroke="#808080" stroke-width="0.7"/><path d="M104.61 20V22.2" stroke="#6c6c6c" stroke-width="0.6"/><path d="M108.50 20V22.2" stroke="#6c6c6c" stroke-width="0.6"/><path d="M112.38 20V22.2" stroke="#6c6c6c" stroke-width="0.6"/><path d="M116.27 20V22.2" stroke="#6c6c6c" stroke-width="0.6"/><path d="M120.15 18V22.2" stroke="#858585" stroke-width="0.7"/><path d="M124.04 20V22.2" stroke="#6c6c6c" stroke-width="0.6"/><path d="M127.92 20V22.2" stroke="#6c6c6c" stroke-width="0.6"/><path d="M131.81 20V22.2" stroke="#6c6c6c" stroke-width="0.6"/><path d="M135.69 20V22.2" stroke="#6c6c6c" stroke-width="0.6"/><path d="M139.58 19.2V22.2" stroke="#808080" stroke-width="0.7"/><path d="M143.46 20V22.2" stroke="#6c6c6c" stroke-width="0.6"/><path d="M147.35 20V22.2" stroke="#6c6c6c" stroke-width="0.6"/><path d="M151.23 20V22.2" stroke="#6c6c6c" stroke-width="0.6"/><path d="M155.12 20V22.2" stroke="#6c6c6c" stroke-width="0.6"/><path d="M159.00 3.5V22.2" stroke="#8c8c8c" stroke-width="0.8"/><path d="M162.89 20V22.2" stroke="#6c6c6c" stroke-width="0.6"/><path d="M166.77 20V22.2" stroke="#6c6c6c" stroke-width="0.6"/><path d="M170.66 20V22.2" stroke="#6c6c6c" stroke-width="0.6"/><path d="M174.54 20V22.2" stroke="#6c6c6c" stroke-width="0.6"/><path d="M178.43 19.2V22.2" stroke="#808080" stroke-width="0.7"/><path d="M182.31 20V22.2" stroke="#6c6c6c" stroke-width="0.6"/><path d="M186.20 20V22.2" stroke="#6c6c6c" stroke-width="0.6"/><path d="M190.08 20V22.2" stroke="#6c6c6c" stroke-width="0.6"/><path d="M193.97 20V22.2" stroke="#6c6c6c" stroke-width="0.6"/><path d="M197.85 18V22.2" stroke="#858585" stroke-width="0.7"/><path d="M201.74 20V22.2" stroke="#6c6c6c" stroke-width="0.6"/><path d="M205.62 20V22.2" stroke="#6c6c6c" stroke-width="0.6"/><path d="M209.51 20V22.2" stroke="#6c6c6c" stroke-width="0.6"/><path d="M213.39 20V22.2" stroke="#6c6c6c" stroke-width="0.6"/><path d="M217.28 19.2V22.2" stroke="#808080" stroke-width="0.7"/><path d="M221.16 20V22.2" stroke="#6c6c6c" stroke-width="0.6"/><path d="M225.05 20V22.2" stroke="#6c6c6c" stroke-width="0.6"/><path d="M228.93 20V22.2" stroke="#6c6c6c" stroke-width="0.6"/><path d="M232.82 20V22.2" stroke="#6c6c6c" stroke-width="0.6"/><path d="M236.70 3.5V22.2" stroke="#8c8c8c" stroke-width="0.8"/><path d="M240.59 20V22.2" stroke="#6c6c6c" stroke-width="0.6"/><path d="M244.47 20V22.2" stroke="#6c6c6c" stroke-width="0.6"/><path d="M248.36 20V22.2" stroke="#6c6c6c" stroke-width="0.6"/><path d="M252.24 20V22.2" stroke="#6c6c6c" stroke-width="0.6"/><path d="M256.12 19.2V22.2" stroke="#808080" stroke-width="0.7"/><path d="M260.01 20V22.2" stroke="#6c6c6c" stroke-width="0.6"/><path d="M263.90 20V22.2" stroke="#6c6c6c" stroke-width="0.6"/><path d="M267.78 20V22.2" stroke="#6c6c6c" stroke-width="0.6"/><path d="M271.67 20V22.2" stroke="#6c6c6c" stroke-width="0.6"/><path d="M275.55 18V22.2" stroke="#858585" stroke-width="0.7"/><path d="M279.44 20V22.2" stroke="#6c6c6c" stroke-width="0.6"/><path d="M283.32 20V22.2" stroke="#6c6c6c" stroke-width="0.6"/><path d="M287.21 20V22.2" stroke="#6c6c6c" stroke-width="0.6"/><path d="M291.09 20V22.2" stroke="#6c6c6c" stroke-width="0.6"/><path d="M294.98 19.2V22.2" stroke="#808080" stroke-width="0.7"/><path d="M298.86 20V22.2" stroke="#6c6c6c" stroke-width="0.6"/><path d="M302.75 20V22.2" stroke="#6c6c6c" stroke-width="0.6"/><path d="M306.63 20V22.2" stroke="#6c6c6c" stroke-width="0.6"/><path d="M310.52 20V22.2" stroke="#6c6c6c" stroke-width="0.6"/><path d="M314.40 3.5V22.2" stroke="#8c8c8c" stroke-width="0.8"/><path d="M318.29 20V22.2" stroke="#6c6c6c" stroke-width="0.6"/><path d="M322.17 20V22.2" stroke="#6c6c6c" stroke-width="0.6"/><path d="M326.06 20V22.2" stroke="#6c6c6c" stroke-width="0.6"/><path d="M329.94 20V22.2" stroke="#6c6c6c" stroke-width="0.6"/><path d="M333.83 19.2V22.2" stroke="#808080" stroke-width="0.7"/><path d="M337.71 20V22.2" stroke="#6c6c6c" stroke-width="0.6"/><path d="M341.60 20V22.2" stroke="#6c6c6c" stroke-width="0.6"/></svg>
<div class="t" style="left:287.6px;top:149.7px;font-size:7px;letter-spacing:-0.2px;color:#c8c8c8;">2:16.000</div>
<div class="t" style="left:365.3px;top:149.7px;font-size:7px;letter-spacing:-0.2px;color:#c8c8c8;">2:18.000</div>
<div class="t" style="left:443.0px;top:149.7px;font-size:7px;letter-spacing:-0.2px;color:#c8c8c8;">2:20.000</div>
<div class="t" style="left:520.7px;top:149.7px;font-size:7px;letter-spacing:-0.2px;color:#c8c8c8;">2:22.000</div>
<div class="t" style="left:598.4000000000001px;top:149.7px;font-size:7px;letter-spacing:-0.2px;color:#c8c8c8;">2:24.000</div>
<div class="a" style="left:282px;top:228.3px;width:334.5px;height:42px;background:#917619;"></div>
<svg class="a" style="left:0;top:0" width="900" height="582"><path d="M282 249.6H616.5" stroke="#85601a" stroke-width="0.6"/><rect x="315.8" y="228.3" width="35.5" height="42" fill="#8a7019" fill-opacity=".5"/><path d="M316.3 238.62 316.7 238.23 317.1 238.17 317.5 238.62 317.9 238.62 318.3 238.62 318.7 238.62 319.1 238.62 319.5 238.62 319.9 238.35 320.3 238.22 320.7 238.57 321.1 238.62 321.5 238.62 321.9 238.62 322.3 238.62 322.7 238.35 323.1 238.50 323.5 238.62 323.9 238.62 324.3 238.62 324.7 238.62 325.1 238.11 325.5 236.76 325.9 236.59 326.3 237.25 326.7 237.85 327.1 237.88 327.5 238.03 327.9 238.62 328.3 238.62 328.7 238.62 329.1 238.62 329.5 238.62 329.9 238.62 330.3 238.62 330.7 238.62 331.1 238.62 331.5 238.62 331.9 238.62 332.3 238.62 332.7 238.62 333.1 238.62 333.5 238.62 333.9 238.62 334.3 238.62 334.7 238.62 335.1 238.62 335.5 238.62 335.9 238.62 336.3 238.62 336.7 238.62 337.1 238.62 337.5 238.62 337.9 238.62 338.3 238.62 338.7 238.62 339.1 238.62 339.5 238.62 339.9 238.62 340.3 238.62 340.7 238.62 341.1 238.62 341.5 238.62 341.9 238.62 342.3 238.62 342.7 238.62 343.1 238.62 343.5 238.62 343.9 238.62 344.3 238.62 344.7 238.62 345.1 238.62 345.5 238.62 345.9 238.62 346.3 238.62 346.7 238.62 347.1 238.62 347.5 238.62 347.9 238.62 348.3 238.62 348.7 238.62 349.1 238.62 349.5 238.62 349.9 238.62 350.3 238.62 350.7 238.62 L350.7 239.18 350.3 239.18 349.9 239.18 349.5 239.18 349.1 239.18 348.7 239.18 348.3 239.18 347.9 239.18 347.5 239.18 347.1 239.18 346.7 239.18 346.3 239.18 345.9 239.18 345.5 239.18 345.1 239.18 344.7 239.18 344.3 239.18 343.9 239.18 343.5 239.18 343.1 239.18 342.7 239.18 342.3 239.18 341.9 239.18 341.5 239.18 341.1 239.18 340.7 239.18 340.3 239.18 339.9 239.18 339.5 239.18 339.1 239.18 338.7 239.18 338.3 239.18 337.9 239.18 337.5 239.18 337.1 239.18 336.7 239.18 336.3 239.18 335.9 239.18 335.5 239.18 335.1 239.18 334.7 239.18 334.3 239.18 333.9 239.18 333.5 239.18 333.1 239.18 332.7 239.18 332.3 239.18 331.9 239.18 331.5 239.18 331.1 239.18 330.7 239.18 330.3 239.18 329.9 239.18 329.5 239.18 329.1 239.18 328.7 239.18 328.3 239.18 327.9 239.18 327.5 239.77 327.1 239.92 326.7 239.95 326.3 240.55 325.9 241.21 325.5 241.04 325.1 239.69 324.7 239.18 324.3 239.18 323.9 239.18 323.5 239.18 323.1 239.30 322.7 239.45 322.3 239.18 321.9 239.18 321.5 239.18 321.1 239.18 320.7 239.23 320.3 239.58 319.9 239.45 319.5 239.18 319.1 239.18 318.7 239.18 318.3 239.18 317.9 239.18 317.5 239.18 317.1 239.63 316.7 239.57 316.3 239.18Z" fill="#47474f"/><path d="M316.3 259.72 316.7 259.33 317.1 259.27 317.5 259.72 317.9 259.72 318.3 259.72 318.7 259.72 319.1 259.72 319.5 259.72 319.9 259.45 320.3 259.32 320.7 259.67 321.1 259.72 321.5 259.72 321.9 259.72 322.3 259.72 322.7 259.45 323.1 259.60 323.5 259.72 323.9 259.72 324.3 259.72 324.7 259.72 325.1 259.21 325.5 257.86 325.9 257.69 326.3 258.35 326.7 258.95 327.1 258.98 327.5 259.13 327.9 259.72 328.3 259.72 328.7 259.72 329.1 259.72 329.5 259.72 329.9 259.72 330.3 259.72 330.7 259.72 331.1 259.72 331.5 259.72 331.9 259.72 332.3 259.72 332.7 259.72 333.1 259.72 333.5 259.72 333.9 259.72 334.3 259.72 334.7 259.72 335.1 259.72 335.5 259.72 335.9 259.72 336.3 259.72 336.7 259.72 337.1 259.72 337.5 259.72 337.9 259.72 338.3 259.72 338.7 259.72 339.1 259.72 339.5 259.72 339.9 259.72 340.3 259.72 340.7 259.72 341.1 259.72 341.5 259.72 341.9 259.72 342.3 259.72 342.7 259.72 343.1 259.72 343.5 259.72 343.9 259.72 344.3 259.72 344.7 259.72 345.1 259.72 345.5 259.72 345.9 259.72 346.3 259.72 346.7 259.72 347.1 259.72 347.5 259.72 347.9 259.72 348.3 259.72 348.7 259.72 349.1 259.72 349.5 259.72 349.9 259.72 350.3 259.72 350.7 259.72 L350.7 260.28 350.3 260.28 349.9 260.28 349.5 260.28 349.1 260.28 348.7 260.28 348.3 260.28 347.9 260.28 347.5 260.28 347.1 260.28 346.7 260.28 346.3 260.28 345.9 260.28 345.5 260.28 345.1 260.28 344.7 260.28 344.3 260.28 343.9 260.28 343.5 260.28 343.1 260.28 342.7 260.28 342.3 260.28 341.9 260.28 341.5 260.28 341.1 260.28 340.7 260.28 340.3 260.28 339.9 260.28 339.5 260.28 339.1 260.28 338.7 260.28 338.3 260.28 337.9 260.28 337.5 260.28 337.1 260.28 336.7 260.28 336.3 260.28 335.9 260.28 335.5 260.28 335.1 260.28 334.7 260.28 334.3 260.28 333.9 260.28 333.5 260.28 333.1 260.28 332.7 260.28 332.3 260.28 331.9 260.28 331.5 260.28 331.1 260.28 330.7 260.28 330.3 260.28 329.9 260.28 329.5 260.28 329.1 260.28 328.7 260.28 328.3 260.28 327.9 260.28 327.5 260.87 327.1 261.02 326.7 261.05 326.3 261.65 325.9 262.31 325.5 262.14 325.1 260.79 324.7 260.28 324.3 260.28 323.9 260.28 323.5 260.28 323.1 260.40 322.7 260.55 322.3 260.28 321.9 260.28 321.5 260.28 321.1 260.28 320.7 260.33 320.3 260.68 319.9 260.55 319.5 260.28 319.1 260.28 318.7 260.28 318.3 260.28 317.9 260.28 317.5 260.28 317.1 260.73 316.7 260.67 316.3 260.28Z" fill="#47474f"/><rect x="390.5" y="228.3" width="42.10000000000002" height="42" fill="#8a7019" fill-opacity=".5"/><path d="M391.0 238.62 391.4 238.29 391.8 237.69 392.2 237.70 392.6 238.24 393.0 238.62 393.4 238.62 393.8 238.53 394.2 238.09 394.6 237.57 395.0 237.72 395.4 237.94 395.8 238.55 396.2 238.62 396.6 238.62 397.0 238.62 397.4 238.62 397.8 238.26 398.2 237.78 398.6 237.43 399.0 237.76 399.4 238.29 399.8 238.56 400.2 238.36 400.6 237.47 401.0 235.73 401.4 235.42 401.8 236.48 402.2 237.40 402.6 236.76 403.0 235.17 403.4 235.90 403.8 237.66 404.2 236.17 404.6 233.19 405.0 234.21 405.4 237.65 405.8 236.95 406.2 235.60 406.6 236.80 407.0 238.06 407.4 234.30 407.8 230.97 408.2 234.34 408.6 236.46 409.0 235.56 409.4 235.04 409.8 235.76 410.2 237.00 410.6 236.85 411.0 235.32 411.4 235.06 411.8 236.18 412.2 237.28 412.6 237.53 413.0 236.49 413.4 236.32 413.8 237.08 414.2 238.02 414.6 237.92 415.0 237.37 415.4 237.04 415.8 237.39 416.2 238.12 416.6 238.21 417.0 238.04 417.4 237.79 417.8 238.13 418.2 238.58 418.6 238.62 419.0 238.62 419.4 238.62 419.8 238.62 420.2 238.62 420.6 238.62 421.0 238.62 421.4 238.62 421.8 238.62 422.2 238.62 422.6 238.62 423.0 238.62 423.4 238.62 423.8 238.62 424.2 238.62 424.6 238.62 425.0 238.62 425.4 238.62 425.8 238.62 426.2 238.62 426.6 238.62 427.0 238.62 427.4 238.62 427.8 238.62 428.2 238.62 428.6 238.62 429.0 238.62 429.4 238.62 429.8 238.62 430.2 238.62 430.6 238.62 431.0 238.62 431.4 238.62 431.8 238.62 L431.8 239.18 431.4 239.18 431.0 239.18 430.6 239.18 430.2 239.18 429.8 239.18 429.4 239.18 429.0 239.18 428.6 239.18 428.2 239.18 427.8 239.18 427.4 239.18 427.0 239.18 426.6 239.18 426.2 239.18 425.8 239.18 425.4 239.18 425.0 239.18 424.6 239.18 424.2 239.18 423.8 239.18 423.4 239.18 423.0 239.18 422.6 239.18 422.2 239.18 421.8 239.18 421.4 239.18 421.0 239.18 420.6 239.18 420.2 239.18 419.8 239.18 419.4 239.18 419.0 239.18 418.6 239.18 418.2 239.22 417.8 239.67 417.4 240.01 417.0 239.76 416.6 239.59 416.2 239.68 415.8 240.41 415.4 240.76 415.0 240.43 414.6 239.88 414.2 239.78 413.8 240.72 413.4 241.48 413.0 241.31 412.6 240.27 412.2 240.52 411.8 241.62 411.4 242.74 411.0 242.48 410.6 240.95 410.2 240.80 409.8 242.04 409.4 242.76 409.0 242.24 408.6 241.34 408.2 243.46 407.8 246.83 407.4 243.50 407.0 239.74 406.6 241.00 406.2 242.20 405.8 240.85 405.4 240.15 405.0 243.59 404.6 244.61 404.2 241.63 403.8 240.14 403.4 241.90 403.0 242.63 402.6 241.04 402.2 240.40 401.8 241.32 401.4 242.38 401.0 242.07 400.6 240.33 400.2 239.44 399.8 239.24 399.4 239.51 399.0 240.04 398.6 240.37 398.2 240.02 397.8 239.54 397.4 239.18 397.0 239.18 396.6 239.18 396.2 239.18 395.8 239.25 395.4 239.86 395.0 240.08 394.6 240.23 394.2 239.71 393.8 239.27 393.4 239.18 393.0 239.18 392.6 239.56 392.2 240.10 391.8 240.11 391.4 239.51 391.0 239.18Z" fill="#47474f"/><path d="M391.0 259.72 391.4 259.39 391.8 258.79 392.2 258.80 392.6 259.34 393.0 259.72 393.4 259.72 393.8 259.63 394.2 259.19 394.6 258.67 395.0 258.82 395.4 259.04 395.8 259.65 396.2 259.72 396.6 259.72 397.0 259.72 397.4 259.72 397.8 259.36 398.2 258.88 398.6 258.53 399.0 258.86 399.4 259.39 399.8 259.66 400.2 259.46 400.6 258.57 401.0 256.83 401.4 256.52 401.8 257.58 402.2 258.50 402.6 257.86 403.0 256.27 403.4 257.00 403.8 258.76 404.2 257.27 404.6 254.29 405.0 255.31 405.4 258.75 405.8 258.05 406.2 256.70 406.6 257.90 407.0 259.16 407.4 255.40 407.8 252.07 408.2 255.44 408.6 257.56 409.0 256.66 409.4 256.14 409.8 256.86 410.2 258.10 410.6 257.95 411.0 256.42 411.4 256.16 411.8 257.28 412.2 258.38 412.6 258.63 413.0 257.59 413.4 257.42 413.8 258.18 414.2 259.12 414.6 259.02 415.0 258.47 415.4 258.14 415.8 258.49 416.2 259.22 416.6 259.31 417.0 259.14 417.4 258.89 417.8 259.23 418.2 259.68 418.6 259.72 419.0 259.72 419.4 259.72 419.8 259.72 420.2 259.72 420.6 259.72 421.0 259.72 421.4 259.72 421.8 259.72 422.2 259.72 422.6 259.72 423.0 259.72 423.4 259.72 423.8 259.72 424.2 259.72 424.6 259.72 425.0 259.72 425.4 259.72 425.8 259.72 426.2 259.72 426.6 259.72 427.0 259.72 427.4 259.72 427.8 259.72 428.2 259.72 428.6 259.72 429.0 259.72 429.4 259.72 429.8 259.72 430.2 259.72 430.6 259.72 431.0 259.72 431.4 259.72 431.8 259.72 L431.8 260.28 431.4 260.28 431.0 260.28 430.6 260.28 430.2 260.28 429.8 260.28 429.4 260.28 429.0 260.28 428.6 260.28 428.2 260.28 427.8 260.28 427.4 260.28 427.0 260.28 426.6 260.28 426.2 260.28 425.8 260.28 425.4 260.28 425.0 260.28 424.6 260.28 424.2 260.28 423.8 260.28 423.4 260.28 423.0 260.28 422.6 260.28 422.2 260.28 421.8 260.28 421.4 260.28 421.0 260.28 420.6 260.28 420.2 260.28 419.8 260.28 419.4 260.28 419.0 260.28 418.6 260.28 418.2 260.32 417.8 260.77 417.4 261.11 417.0 260.86 416.6 260.69 416.2 260.78 415.8 261.51 415.4 261.86 415.0 261.53 414.6 260.98 414.2 260.88 413.8 261.82 413.4 262.58 413.0 262.41 412.6 261.37 412.2 261.62 411.8 262.72 411.4 263.84 411.0 263.58 410.6 262.05 410.2 261.90 409.8 263.14 409.4 263.86 409.0 263.34 408.6 262.44 408.2 264.56 407.8 267.93 407.4 264.60 407.0 260.84 406.6 262.10 406.2 263.30 405.8 261.95 405.4 261.25 405.0 264.69 404.6 265.71 404.2 262.73 403.8 261.24 403.4 263.00 403.0 263.73 402.6 262.14 402.2 261.50 401.8 262.42 401.4 263.48 401.0 263.17 400.6 261.43 400.2 260.54 399.8 260.34 399.4 260.61 399.0 261.14 398.6 261.47 398.2 261.12 397.8 260.64 397.4 260.28 397.0 260.28 396.6 260.28 396.2 260.28 395.8 260.35 395.4 260.96 395.0 261.18 394.6 261.33 394.2 260.81 393.8 260.37 393.4 260.28 393.0 260.28 392.6 260.66 392.2 261.20 391.8 261.21 391.4 260.61 391.0 260.28Z" fill="#47474f"/><rect x="471.6" y="228.3" width="50.0" height="42" fill="#8a7019" fill-opacity=".5"/><path d="M472.1 238.62 472.5 238.62 472.9 238.39 473.3 238.09 473.7 238.60 474.1 238.62 474.5 238.62 474.9 238.62 475.3 238.62 475.7 238.62 476.1 238.62 476.5 238.37 476.9 237.71 477.3 237.17 477.7 237.16 478.1 237.49 478.5 237.84 478.9 237.59 479.3 237.12 479.7 236.58 480.1 236.54 480.5 236.89 480.9 237.56 481.3 237.75 481.7 237.66 482.1 236.97 482.5 236.61 482.9 236.73 483.3 237.45 483.7 237.94 484.1 237.91 484.5 237.30 484.9 236.75 485.3 236.46 485.7 237.11 486.1 237.79 486.5 237.99 486.9 237.89 487.3 237.40 487.7 237.10 488.1 237.54 488.5 238.17 488.9 238.12 489.3 237.17 489.7 235.98 490.1 236.15 490.5 236.63 490.9 235.35 491.3 234.91 491.7 236.25 492.1 235.30 492.5 230.18 492.9 231.86 493.3 235.97 493.7 235.37 494.1 234.43 494.5 236.05 494.9 237.06 495.3 236.65 495.7 235.88 496.1 235.91 496.5 237.23 496.9 237.56 497.3 236.32 497.7 234.82 498.1 235.17 498.5 236.14 498.9 236.88 499.3 237.20 499.7 236.76 500.1 236.24 500.5 236.23 500.9 237.17 501.3 238.28 501.7 238.58 502.1 238.35 502.5 237.79 502.9 236.86 503.3 236.49 503.7 236.45 504.1 237.28 504.5 237.86 504.9 237.78 505.3 237.52 505.7 237.45 506.1 237.82 506.5 238.32 506.9 238.62 507.3 238.62 507.7 238.25 508.1 237.74 508.5 237.61 508.9 237.98 509.3 238.44 509.7 238.62 510.1 238.27 510.5 238.06 510.9 238.47 511.3 238.62 511.7 238.62 512.1 238.62 512.5 238.62 512.9 238.62 513.3 238.62 513.7 238.62 514.1 238.62 514.5 238.62 514.9 238.62 515.3 238.62 515.7 238.62 516.1 238.62 516.5 238.62 516.9 238.62 517.3 238.62 517.7 238.62 518.1 238.62 518.5 238.62 518.9 238.62 519.3 238.62 519.7 238.62 520.1 238.62 520.5 238.62 520.9 238.62 L520.9 239.18 520.5 239.18 520.1 239.18 519.7 239.18 519.3 239.18 518.9 239.18 518.5 239.18 518.1 239.18 517.7 239.18 517.3 239.18 516.9 239.18 516.5 239.18 516.1 239.18 515.7 239.18 515.3 239.18 514.9 239.18 514.5 239.18 514.1 239.18 513.7 239.18 513.3 239.18 512.9 239.18 512.5 239.18 512.1 239.18 511.7 239.18 511.3 239.18 510.9 239.33 510.5 239.74 510.1 239.53 509.7 239.18 509.3 239.36 508.9 239.82 508.5 240.19 508.1 240.06 507.7 239.55 507.3 239.18 506.9 239.18 506.5 239.48 506.1 239.98 505.7 240.35 505.3 240.28 504.9 240.02 504.5 239.94 504.1 240.52 503.7 241.35 503.3 241.31 502.9 240.94 502.5 240.01 502.1 239.45 501.7 239.22 501.3 239.52 500.9 240.63 500.5 241.57 500.1 241.56 499.7 241.04 499.3 240.60 498.9 240.92 498.5 241.66 498.1 242.63 497.7 242.98 497.3 241.48 496.9 240.24 496.5 240.57 496.1 241.89 495.7 241.92 495.3 241.15 494.9 240.74 494.5 241.75 494.1 243.37 493.7 242.43 493.3 241.83 492.9 245.94 492.5 247.62 492.1 242.50 491.7 241.55 491.3 242.89 490.9 242.45 490.5 241.17 490.1 241.65 489.7 241.82 489.3 240.63 488.9 239.68 488.5 239.63 488.1 240.26 487.7 240.70 487.3 240.40 486.9 239.91 486.5 239.81 486.1 240.01 485.7 240.69 485.3 241.34 484.9 241.05 484.5 240.50 484.1 239.89 483.7 239.86 483.3 240.35 482.9 241.07 482.5 241.19 482.1 240.83 481.7 240.14 481.3 240.05 480.9 240.24 480.5 240.91 480.1 241.26 479.7 241.22 479.3 240.68 478.9 240.21 478.5 239.96 478.1 240.31 477.7 240.64 477.3 240.63 476.9 240.09 476.5 239.43 476.1 239.18 475.7 239.18 475.3 239.18 474.9 239.18 474.5 239.18 474.1 239.18 473.7 239.20 473.3 239.71 472.9 239.41 472.5 239.18 472.1 239.18Z" fill="#47474f"/><path d="M472.1 259.72 472.5 259.72 472.9 259.49 473.3 259.19 473.7 259.70 474.1 259.72 474.5 259.72 474.9 259.72 475.3 259.72 475.7 259.72 476.1 259.72 476.5 259.47 476.9 258.81 477.3 258.27 477.7 258.26 478.1 258.59 478.5 258.94 478.9 258.69 479.3 258.22 479.7 257.68 480.1 257.64 480.5 257.99 480.9 258.66 481.3 258.85 481.7 258.76 482.1 258.07 482.5 257.71 482.9 257.83 483.3 258.55 483.7 259.04 484.1 259.01 484.5 258.40 484.9 257.85 485.3 257.56 485.7 258.21 486.1 258.89 486.5 259.09 486.9 258.99 487.3 258.50 487.7 258.20 488.1 258.64 488.5 259.27 488.9 259.22 489.3 258.27 489.7 257.08 490.1 257.25 490.5 257.73 490.9 256.45 491.3 256.01 491.7 257.35 492.1 256.40 492.5 251.28 492.9 252.96 493.3 257.07 493.7 256.47 494.1 255.53 494.5 257.15 494.9 258.16 495.3 257.75 495.7 256.98 496.1 257.01 496.5 258.33 496.9 258.66 497.3 257.42 497.7 255.92 498.1 256.27 498.5 257.24 498.9 257.98 499.3 258.30 499.7 257.86 500.1 257.34 500.5 257.33 500.9 258.27 501.3 259.38 501.7 259.68 502.1 259.45 502.5 258.89 502.9 257.96 503.3 257.59 503.7 257.55 504.1 258.38 504.5 258.96 504.9 258.88 505.3 258.62 505.7 258.55 506.1 258.92 506.5 259.42 506.9 259.72 507.3 259.72 507.7 259.35 508.1 258.84 508.5 258.71 508.9 259.08 509.3 259.54 509.7 259.72 510.1 259.37 510.5 259.16 510.9 259.57 511.3 259.72 511.7 259.72 512.1 259.72 512.5 259.72 512.9 259.72 513.3 259.72 513.7 259.72 514.1 259.72 514.5 259.72 514.9 259.72 515.3 259.72 515.7 259.72 516.1 259.72 516.5 259.72 516.9 259.72 517.3 259.72 517.7 259.72 518.1 259.72 518.5 259.72 518.9 259.72 519.3 259.72 519.7 259.72 520.1 259.72 520.5 259.72 520.9 259.72 L520.9 260.28 520.5 260.28 520.1 260.28 519.7 260.28 519.3 260.28 518.9 260.28 518.5 260.28 518.1 260.28 517.7 260.28 517.3 260.28 516.9 260.28 516.5 260.28 516.1 260.28 515.7 260.28 515.3 260.28 514.9 260.28 514.5 260.28 514.1 260.28 513.7 260.28 513.3 260.28 512.9 260.28 512.5 260.28 512.1 260.28 511.7 260.28 511.3 260.28 510.9 260.43 510.5 260.84 510.1 260.63 509.7 260.28 509.3 260.46 508.9 260.92 508.5 261.29 508.1 261.16 507.7 260.65 507.3 260.28 506.9 260.28 506.5 260.58 506.1 261.08 505.7 261.45 505.3 261.38 504.9 261.12 504.5 261.04 504.1 261.62 503.7 262.45 503.3 262.41 502.9 262.04 502.5 261.11 502.1 260.55 501.7 260.32 501.3 260.62 500.9 261.73 500.5 262.67 500.1 262.66 499.7 262.14 499.3 261.70 498.9 262.02 498.5 262.76 498.1 263.73 497.7 264.08 497.3 262.58 496.9 261.34 496.5 261.67 496.1 262.99 495.7 263.02 495.3 262.25 494.9 261.84 494.5 262.85 494.1 264.47 493.7 263.53 493.3 262.93 492.9 267.04 492.5 268.72 492.1 263.60 491.7 262.65 491.3 263.99 490.9 263.55 490.5 262.27 490.1 262.75 489.7 262.92 489.3 261.73 488.9 260.78 488.5 260.73 488.1 261.36 487.7 261.80 487.3 261.50 486.9 261.01 486.5 260.91 486.1 261.11 485.7 261.79 485.3 262.44 484.9 262.15 484.5 261.60 484.1 260.99 483.7 260.96 483.3 261.45 482.9 262.17 482.5 262.29 482.1 261.93 481.7 261.24 481.3 261.15 480.9 261.34 480.5 262.01 480.1 262.36 479.7 262.32 479.3 261.78 478.9 261.31 478.5 261.06 478.1 261.41 477.7 261.74 477.3 261.73 476.9 261.19 476.5 260.53 476.1 260.28 475.7 260.28 475.3 260.28 474.9 260.28 474.5 260.28 474.1 260.28 473.7 260.30 473.3 260.81 472.9 260.51 472.5 260.28 472.1 260.28Z" fill="#47474f"/><rect x="560.6" y="228.3" width="50.10000000000002" height="42" fill="#8a7019" fill-opacity=".5"/><path d="M561.1 238.62 561.5 238.41 561.9 238.18 562.3 238.62 562.7 238.62 563.1 238.62 563.5 238.62 563.9 238.62 564.3 238.62 564.7 238.62 565.1 238.62 565.5 238.62 565.9 238.62 566.3 238.62 566.7 238.62 567.1 238.62 567.5 238.62 567.9 238.62 568.3 238.62 568.7 238.49 569.1 238.00 569.5 237.47 569.9 237.32 570.3 237.45 570.7 237.25 571.1 236.50 571.5 236.47 571.9 236.83 572.3 237.67 572.7 237.75 573.1 237.34 573.5 237.12 573.9 237.78 574.3 238.43 574.7 238.62 575.1 238.50 575.5 237.99 575.9 237.26 576.3 237.29 576.7 237.44 577.1 237.31 577.5 236.72 577.9 236.79 578.3 237.09 578.7 237.68 579.1 237.67 579.5 237.63 579.9 237.90 580.3 238.26 580.7 238.62 581.1 238.62 581.5 238.60 581.9 237.70 582.3 236.31 582.7 236.54 583.1 237.39 583.5 234.23 583.9 229.70 584.3 233.65 584.7 236.57 585.1 235.38 585.5 235.35 585.9 236.99 586.3 237.67 586.7 237.29 587.1 236.47 587.5 237.08 587.9 237.69 588.3 238.06 588.7 237.15 589.1 235.70 589.5 235.30 589.9 235.89 590.3 236.98 590.7 237.54 591.1 237.00 591.5 236.51 591.9 237.00 592.3 237.93 592.7 238.18 593.1 237.76 593.5 236.86 593.9 236.23 594.3 236.63 594.7 237.15 595.1 237.65 595.5 237.71 595.9 237.35 596.3 237.78 596.7 238.13 597.1 238.38 597.5 237.93 597.9 237.46 598.3 238.05 598.7 238.52 599.1 238.62 599.5 238.50 599.9 238.18 600.3 238.37 600.7 238.62 601.1 238.62 601.5 238.62 601.9 238.62 602.3 238.62 602.7 238.62 603.1 238.62 603.5 238.62 603.9 238.62 604.3 238.62 604.7 238.62 605.1 238.62 605.5 238.62 605.9 238.62 606.3 238.62 606.7 238.62 607.1 238.62 607.5 238.62 607.9 238.62 608.3 238.62 608.7 238.62 609.1 238.62 609.5 238.62 609.9 238.62 L609.9 239.18 609.5 239.18 609.1 239.18 608.7 239.18 608.3 239.18 607.9 239.18 607.5 239.18 607.1 239.18 606.7 239.18 606.3 239.18 605.9 239.18 605.5 239.18 605.1 239.18 604.7 239.18 604.3 239.18 603.9 239.18 603.5 239.18 603.1 239.18 602.7 239.18 602.3 239.18 601.9 239.18 601.5 239.18 601.1 239.18 600.7 239.18 600.3 239.43 599.9 239.62 599.5 239.30 599.1 239.18 598.7 239.28 598.3 239.75 597.9 240.34 597.5 239.87 597.1 239.42 596.7 239.67 596.3 240.02 595.9 240.45 595.5 240.09 595.1 240.15 594.7 240.65 594.3 241.17 593.9 241.57 593.5 240.94 593.1 240.04 592.7 239.62 592.3 239.87 591.9 240.80 591.5 241.29 591.1 240.80 590.7 240.26 590.3 240.82 589.9 241.91 589.5 242.50 589.1 242.10 588.7 240.65 588.3 239.74 587.9 240.11 587.5 240.72 587.1 241.33 586.7 240.51 586.3 240.13 585.9 240.81 585.5 242.45 585.1 242.42 584.7 241.23 584.3 244.15 583.9 248.10 583.5 243.57 583.1 240.41 582.7 241.26 582.3 241.49 581.9 240.10 581.5 239.20 581.1 239.18 580.7 239.18 580.3 239.54 579.9 239.90 579.5 240.17 579.1 240.13 578.7 240.12 578.3 240.71 577.9 241.01 577.5 241.08 577.1 240.49 576.7 240.36 576.3 240.51 575.9 240.54 575.5 239.81 575.1 239.30 574.7 239.18 574.3 239.37 573.9 240.02 573.5 240.68 573.1 240.46 572.7 240.05 572.3 240.13 571.9 240.97 571.5 241.33 571.1 241.30 570.7 240.55 570.3 240.35 569.9 240.48 569.5 240.33 569.1 239.80 568.7 239.31 568.3 239.18 567.9 239.18 567.5 239.18 567.1 239.18 566.7 239.18 566.3 239.18 565.9 239.18 565.5 239.18 565.1 239.18 564.7 239.18 564.3 239.18 563.9 239.18 563.5 239.18 563.1 239.18 562.7 239.18 562.3 239.18 561.9 239.62 561.5 239.39 561.1 239.18Z" fill="#47474f"/><path d="M561.1 259.72 561.5 259.51 561.9 259.28 562.3 259.72 562.7 259.72 563.1 259.72 563.5 259.72 563.9 259.72 564.3 259.72 564.7 259.72 565.1 259.72 565.5 259.72 565.9 259.72 566.3 259.72 566.7 259.72 567.1 259.72 567.5 259.72 567.9 259.72 568.3 259.72 568.7 259.59 569.1 259.10 569.5 258.57 569.9 258.42 570.3 258.55 570.7 258.35 571.1 257.60 571.5 257.57 571.9 257.93 572.3 258.77 572.7 258.85 573.1 258.44 573.5 258.22 573.9 258.88 574.3 259.53 574.7 259.72 575.1 259.60 575.5 259.09 575.9 258.36 576.3 258.39 576.7 258.54 577.1 258.41 577.5 257.82 577.9 257.89 578.3 258.19 578.7 258.78 579.1 258.77 579.5 258.73 579.9 259.00 580.3 259.36 580.7 259.72 581.1 259.72 581.5 259.70 581.9 258.80 582.3 257.41 582.7 257.64 583.1 258.49 583.5 255.33 583.9 250.80 584.3 254.75 584.7 257.67 585.1 256.48 585.5 256.45 585.9 258.09 586.3 258.77 586.7 258.39 587.1 257.57 587.5 258.18 587.9 258.79 588.3 259.16 588.7 258.25 589.1 256.80 589.5 256.40 589.9 256.99 590.3 258.08 590.7 258.64 591.1 258.10 591.5 257.61 591.9 258.10 592.3 259.03 592.7 259.28 593.1 258.86 593.5 257.96 593.9 257.33 594.3 257.73 594.7 258.25 595.1 258.75 595.5 258.81 595.9 258.45 596.3 258.88 596.7 259.23 597.1 259.48 597.5 259.03 597.9 258.56 598.3 259.15 598.7 259.62 599.1 259.72 599.5 259.60 599.9 259.28 600.3 259.47 600.7 259.72 601.1 259.72 601.5 259.72 601.9 259.72 602.3 259.72 602.7 259.72 603.1 259.72 603.5 259.72 603.9 259.72 604.3 259.72 604.7 259.72 605.1 259.72 605.5 259.72 605.9 259.72 606.3 259.72 606.7 259.72 607.1 259.72 607.5 259.72 607.9 259.72 608.3 259.72 608.7 259.72 609.1 259.72 609.5 259.72 609.9 259.72 L609.9 260.28 609.5 260.28 609.1 260.28 608.7 260.28 608.3 260.28 607.9 260.28 607.5 260.28 607.1 260.28 606.7 260.28 606.3 260.28 605.9 260.28 605.5 260.28 605.1 260.28 604.7 260.28 604.3 260.28 603.9 260.28 603.5 260.28 603.1 260.28 602.7 260.28 602.3 260.28 601.9 260.28 601.5 260.28 601.1 260.28 600.7 260.28 600.3 260.53 599.9 260.72 599.5 260.40 599.1 260.28 598.7 260.38 598.3 260.85 597.9 261.44 597.5 260.97 597.1 260.52 596.7 260.77 596.3 261.12 595.9 261.55 595.5 261.19 595.1 261.25 594.7 261.75 594.3 262.27 593.9 262.67 593.5 262.04 593.1 261.14 592.7 260.72 592.3 260.97 591.9 261.90 591.5 262.39 591.1 261.90 590.7 261.36 590.3 261.92 589.9 263.01 589.5 263.60 589.1 263.20 588.7 261.75 588.3 260.84 587.9 261.21 587.5 261.82 587.1 262.43 586.7 261.61 586.3 261.23 585.9 261.91 585.5 263.55 585.1 263.52 584.7 262.33 584.3 265.25 583.9 269.20 583.5 264.67 583.1 261.51 582.7 262.36 582.3 262.59 581.9 261.20 581.5 260.30 581.1 260.28 580.7 260.28 580.3 260.64 579.9 261.00 579.5 261.27 579.1 261.23 578.7 261.22 578.3 261.81 577.9 262.11 577.5 262.18 577.1 261.59 576.7 261.46 576.3 261.61 575.9 261.64 575.5 260.91 575.1 260.40 574.7 260.28 574.3 260.47 573.9 261.12 573.5 261.78 573.1 261.56 572.7 261.15 572.3 261.23 571.9 262.07 571.5 262.43 571.1 262.40 570.7 261.65 570.3 261.45 569.9 261.58 569.5 261.43 569.1 260.90 568.7 260.41 568.3 260.28 567.9 260.28 567.5 260.28 567.1 260.28 566.7 260.28 566.3 260.28 565.9 260.28 565.5 260.28 565.1 260.28 564.7 260.28 564.3 260.28 563.9 260.28 563.5 260.28 563.1 260.28 562.7 260.28 562.3 260.28 561.9 260.72 561.5 260.49 561.1 260.28Z" fill="#47474f"/></svg>
<svg class="a" style="left:282px;top:220px" width="64" height="8"><circle cx="4.3" cy="4.6" r="2.5" fill="none" stroke="#565a60" stroke-width="0.6"/><g fill="#50545a"><rect x="9.8" y="2.1" width="6" height="4"/><rect x="17.8" y="2.1" width="6" height="4"/><rect x="25.5" y="2.1" width="6" height="4"/></g><text x="34.7" y="6.6" font-size="4.7" fill="#5a5e64" font-family="Liberation Sans, sans-serif">&lt;&lt; Main.rpp</text></svg>
<svg class="a" style="left:0;top:0" width="900" height="582"><rect x="315.8" y="280.1" width="35.5" height="40.6" fill="#efe6c4"/><path d="M315.8 300.3H351.3" stroke="#e2c4b0" stroke-width="0.7"/><path d="M315.8 289.3H325.8" stroke="#8a9430" stroke-width="0.5"/><path d="M325.8 289.3H351.3" stroke="#6a55e0" stroke-width="0.5"/><path d="M316.3 289.02 316.7 288.63 317.1 288.57 317.5 289.02 317.9 289.02 318.3 289.02 318.7 289.02 319.1 289.02 319.5 289.02 319.9 288.75 320.3 288.62 320.7 288.97 321.1 289.02 321.5 289.02 321.9 289.02 322.3 289.02 322.7 288.75 323.1 288.90 323.5 289.02 323.9 289.02 324.3 289.02 324.7 289.02 325.1 288.51 325.5 287.16 325.9 286.99 326.3 287.65 326.7 288.25 327.1 288.28 327.5 288.43 327.9 289.02 L327.9 289.58 327.5 290.17 327.1 290.32 326.7 290.35 326.3 290.95 325.9 291.61 325.5 291.44 325.1 290.09 324.7 289.58 324.3 289.58 323.9 289.58 323.5 289.58 323.1 289.70 322.7 289.85 322.3 289.58 321.9 289.58 321.5 289.58 321.1 289.58 320.7 289.63 320.3 289.98 319.9 289.85 319.5 289.58 319.1 289.58 318.7 289.58 318.3 289.58 317.9 289.58 317.5 289.58 317.1 290.03 316.7 289.97 316.3 289.58Z" fill="#4c4c3a"/><path d="M327.1 288.69 327.5 288.78 327.9 289.00 328.3 289.00 328.7 289.00 329.1 289.00 329.5 289.00 L329.5 289.60 329.1 289.60 328.7 289.60 328.3 289.60 327.9 289.60 327.5 289.82 327.1 289.91Z" fill="#5a3fd0"/><path d="M317.1 289.10 317.5 289.10 317.9 289.10 318.3 289.10 318.7 289.10 319.1 289.10 319.5 289.10 319.9 289.10 320.3 289.10 320.7 289.10 321.1 289.10 321.5 289.10 321.9 289.10 322.3 289.10 322.7 289.10 L322.7 289.50 322.3 289.50 321.9 289.50 321.5 289.50 321.1 289.50 320.7 289.50 320.3 289.50 319.9 289.50 319.5 289.50 319.1 289.50 318.7 289.50 318.3 289.50 317.9 289.50 317.5 289.50 317.1 289.50Z" fill="#5e7a3a"/><path d="M315.8 310.3H325.8" stroke="#8a9430" stroke-width="0.5"/><path d="M325.8 310.3H351.3" stroke="#6a55e0" stroke-width="0.5"/><path d="M316.3 310.02 316.7 309.63 317.1 309.57 317.5 310.02 317.9 310.02 318.3 310.02 318.7 310.02 319.1 310.02 319.5 310.02 319.9 309.75 320.3 309.62 320.7 309.97 321.1 310.02 321.5 310.02 321.9 310.02 322.3 310.02 322.7 309.75 323.1 309.90 323.5 310.02 323.9 310.02 324.3 310.02 324.7 310.02 325.1 309.51 325.5 308.16 325.9 307.99 326.3 308.65 326.7 309.25 327.1 309.28 327.5 309.43 327.9 310.02 L327.9 310.58 327.5 311.17 327.1 311.32 326.7 311.35 326.3 311.95 325.9 312.61 325.5 312.44 325.1 311.09 324.7 310.58 324.3 310.58 323.9 310.58 323.5 310.58 323.1 310.70 322.7 310.85 322.3 310.58 321.9 310.58 321.5 310.58 321.1 310.58 320.7 310.63 320.3 310.98 319.9 310.85 319.5 310.58 319.1 310.58 318.7 310.58 318.3 310.58 317.9 310.58 317.5 310.58 317.1 311.03 316.7 310.97 316.3 310.58Z" fill="#4c4c3a"/><path d="M327.1 309.69 327.5 309.78 327.9 310.00 328.3 310.00 328.7 310.00 329.1 310.00 329.5 310.00 L329.5 310.60 329.1 310.60 328.7 310.60 328.3 310.60 327.9 310.60 327.5 310.82 327.1 310.91Z" fill="#5a3fd0"/><path d="M317.1 310.10 317.5 310.10 317.9 310.10 318.3 310.10 318.7 310.10 319.1 310.10 319.5 310.10 319.9 310.10 320.3 310.10 320.7 310.10 321.1 310.10 321.5 310.10 321.9 310.10 322.3 310.10 322.7 310.10 L322.7 310.50 322.3 310.50 321.9 310.50 321.5 310.50 321.1 310.50 320.7 310.50 320.3 310.50 319.9 310.50 319.5 310.50 319.1 310.50 318.7 310.50 318.3 310.50 317.9 310.50 317.5 310.50 317.1 310.50Z" fill="#5e7a3a"/><path d="M317.3 275.3h31.5" stroke="#5a6068" stroke-width="2" stroke-dasharray="1.2 0.8 0.6 1.6 3.2 0.9 3.2 0.9 3.2 0.9 4.4 0.9 3.2 0.9 3.2 40"/><rect x="340.3" y="274.2" width="3.8" height="2.3" fill="#43c0e6"/><rect x="390.5" y="280.1" width="42.10000000000002" height="40.6" fill="#efe6c4"/><path d="M390.5 300.3H432.6" stroke="#e2c4b0" stroke-width="0.7"/><path d="M390.5 289.3H407.8" stroke="#8a9430" stroke-width="0.5"/><path d="M407.8 289.3H432.6" stroke="#6a55e0" stroke-width="0.5"/><path d="M391.0 289.02 391.4 288.69 391.8 288.09 392.2 288.10 392.6 288.64 393.0 289.02 393.4 289.02 393.8 288.93 394.2 288.49 394.6 287.97 395.0 288.12 395.4 288.34 395.8 288.95 396.2 289.02 396.6 289.02 397.0 289.02 397.4 289.02 397.8 288.66 398.2 288.18 398.6 287.83 399.0 288.16 399.4 288.69 399.8 288.96 400.2 288.76 400.6 287.87 401.0 286.13 401.4 285.82 401.8 286.88 402.2 287.80 402.6 287.16 403.0 285.57 403.4 286.30 403.8 288.06 404.2 286.57 404.6 283.59 405.0 284.61 405.4 288.05 405.8 287.35 406.2 286.00 406.6 287.20 407.0 288.46 407.4 284.70 407.8 281.37 408.2 284.74 408.6 286.86 409.0 285.96 409.4 285.44 409.8 286.16 410.2 287.40 410.6 287.25 411.0 285.72 411.4 285.46 411.8 286.58 412.2 287.68 412.6 287.93 413.0 286.89 413.4 286.72 413.8 287.48 414.2 288.42 414.6 288.32 415.0 287.77 415.4 287.44 415.8 287.79 416.2 288.52 416.6 288.61 417.0 288.44 417.4 288.19 417.8 288.53 418.2 288.98 L418.2 289.62 417.8 290.07 417.4 290.41 417.0 290.16 416.6 289.99 416.2 290.08 415.8 290.81 415.4 291.16 415.0 290.83 414.6 290.28 414.2 290.18 413.8 291.12 413.4 291.88 413.0 291.71 412.6 290.67 412.2 290.92 411.8 292.02 411.4 293.14 411.0 292.88 410.6 291.35 410.2 291.20 409.8 292.44 409.4 293.16 409.0 292.64 408.6 291.74 408.2 293.86 407.8 297.23 407.4 293.90 407.0 290.14 406.6 291.40 406.2 292.60 405.8 291.25 405.4 290.55 405.0 293.99 404.6 295.01 404.2 292.03 403.8 290.54 403.4 292.30 403.0 293.03 402.6 291.44 402.2 290.80 401.8 291.72 401.4 292.78 401.0 292.47 400.6 290.73 400.2 289.84 399.8 289.64 399.4 289.91 399.0 290.44 398.6 290.77 398.2 290.42 397.8 289.94 397.4 289.58 397.0 289.58 396.6 289.58 396.2 289.58 395.8 289.65 395.4 290.26 395.0 290.48 394.6 290.63 394.2 290.11 393.8 289.67 393.4 289.58 393.0 289.58 392.6 289.96 392.2 290.50 391.8 290.51 391.4 289.91 391.0 289.58Z" fill="#4c4c3a"/><path d="M411.4 286.99 411.8 287.67 412.2 288.33 412.6 288.48 413.0 287.85 413.4 287.75 413.8 288.21 414.2 288.77 414.6 288.71 415.0 288.38 415.4 288.18 415.8 288.40 416.2 288.83 416.6 288.89 417.0 288.78 417.4 288.64 417.8 288.84 418.2 289.00 418.6 289.00 419.0 289.00 419.4 289.00 L419.4 289.60 419.0 289.60 418.6 289.60 418.2 289.60 417.8 289.76 417.4 289.96 417.0 289.82 416.6 289.71 416.2 289.77 415.8 290.20 415.4 290.42 415.0 290.22 414.6 289.89 414.2 289.83 413.8 290.39 413.4 290.85 413.0 290.75 412.6 290.12 412.2 290.27 411.8 290.93 411.4 291.61Z" fill="#5a3fd0"/><path d="M391.8 289.03 392.2 289.04 392.6 289.10 393.0 289.10 393.4 289.10 393.8 289.10 394.2 289.10 394.6 289.01 395.0 289.04 395.4 289.09 395.8 289.10 396.2 289.10 396.6 289.10 397.0 289.10 397.4 289.10 397.8 289.10 398.2 289.05 398.6 288.98 399.0 289.05 399.4 289.10 399.8 289.10 400.2 289.10 400.6 288.99 401.0 288.60 401.4 288.53 401.8 288.77 402.2 288.97 402.6 288.83 403.0 288.48 403.4 288.64 403.8 289.03 404.2 288.70 404.6 288.04 L404.6 290.56 404.2 289.90 403.8 289.57 403.4 289.96 403.0 290.12 402.6 289.77 402.2 289.63 401.8 289.83 401.4 290.07 401.0 290.00 400.6 289.61 400.2 289.50 399.8 289.50 399.4 289.50 399.0 289.55 398.6 289.62 398.2 289.55 397.8 289.50 397.4 289.50 397.0 289.50 396.6 289.50 396.2 289.50 395.8 289.50 395.4 289.51 395.0 289.56 394.6 289.59 394.2 289.50 393.8 289.50 393.4 289.50 393.0 289.50 392.6 289.50 392.2 289.56 391.8 289.57Z" fill="#5e7a3a"/><path d="M390.5 310.3H407.8" stroke="#8a9430" stroke-width="0.5"/><path d="M407.8 310.3H432.6" stroke="#6a55e0" stroke-width="0.5"/><path d="M391.0 310.02 391.4 309.69 391.8 309.09 392.2 309.10 392.6 309.64 393.0 310.02 393.4 310.02 393.8 309.93 394.2 309.49 394.6 308.97 395.0 309.12 395.4 309.34 395.8 309.95 396.2 310.02 396.6 310.02 397.0 310.02 397.4 310.02 397.8 309.66 398.2 309.18 398.6 308.83 399.0 309.16 399.4 309.69 399.8 309.96 400.2 309.76 400.6 308.87 401.0 307.13 401.4 306.82 401.8 307.88 402.2 308.80 402.6 308.16 403.0 306.57 403.4 307.30 403.8 309.06 404.2 307.57 404.6 304.59 405.0 305.61 405.4 309.05 405.8 308.35 406.2 307.00 406.6 308.20 407.0 309.46 407.4 305.70 407.8 302.37 408.2 305.74 408.6 307.86 409.0 306.96 409.4 306.44 409.8 307.16 410.2 308.40 410.6 308.25 411.0 306.72 411.4 306.46 411.8 307.58 412.2 308.68 412.6 308.93 413.0 307.89 413.4 307.72 413.8 308.48 414.2 309.42 414.6 309.32 415.0 308.77 415.4 308.44 415.8 308.79 416.2 309.52 416.6 309.61 417.0 309.44 417.4 309.19 417.8 309.53 418.2 309.98 L418.2 310.62 417.8 311.07 417.4 311.41 417.0 311.16 416.6 310.99 416.2 311.08 415.8 311.81 415.4 312.16 415.0 311.83 414.6 311.28 414.2 311.18 413.8 312.12 413.4 312.88 413.0 312.71 412.6 311.67 412.2 311.92 411.8 313.02 411.4 314.14 411.0 313.88 410.6 312.35 410.2 312.20 409.8 313.44 409.4 314.16 409.0 313.64 408.6 312.74 408.2 314.86 407.8 318.23 407.4 314.90 407.0 311.14 406.6 312.40 406.2 313.60 405.8 312.25 405.4 311.55 405.0 314.99 404.6 316.01 404.2 313.03 403.8 311.54 403.4 313.30 403.0 314.03 402.6 312.44 402.2 311.80 401.8 312.72 401.4 313.78 401.0 313.47 400.6 311.73 400.2 310.84 399.8 310.64 399.4 310.91 399.0 311.44 398.6 311.77 398.2 311.42 397.8 310.94 397.4 310.58 397.0 310.58 396.6 310.58 396.2 310.58 395.8 310.65 395.4 311.26 395.0 311.48 394.6 311.63 394.2 311.11 393.8 310.67 393.4 310.58 393.0 310.58 392.6 310.96 392.2 311.50 391.8 311.51 391.4 310.91 391.0 310.58Z" fill="#4c4c3a"/><path d="M411.4 307.99 411.8 308.67 412.2 309.33 412.6 309.48 413.0 308.85 413.4 308.75 413.8 309.21 414.2 309.77 414.6 309.71 415.0 309.38 415.4 309.18 415.8 309.40 416.2 309.83 416.6 309.89 417.0 309.78 417.4 309.64 417.8 309.84 418.2 310.00 418.6 310.00 419.0 310.00 419.4 310.00 L419.4 310.60 419.0 310.60 418.6 310.60 418.2 310.60 417.8 310.76 417.4 310.96 417.0 310.82 416.6 310.71 416.2 310.77 415.8 311.20 415.4 311.42 415.0 311.22 414.6 310.89 414.2 310.83 413.8 311.39 413.4 311.85 413.0 311.75 412.6 311.12 412.2 311.27 411.8 311.93 411.4 312.61Z" fill="#5a3fd0"/><path d="M391.8 310.03 392.2 310.04 392.6 310.10 393.0 310.10 393.4 310.10 393.8 310.10 394.2 310.10 394.6 310.01 395.0 310.04 395.4 310.09 395.8 310.10 396.2 310.10 396.6 310.10 397.0 310.10 397.4 310.10 397.8 310.10 398.2 310.05 398.6 309.98 399.0 310.05 399.4 310.10 399.8 310.10 400.2 310.10 400.6 309.99 401.0 309.60 401.4 309.53 401.8 309.77 402.2 309.97 402.6 309.83 403.0 309.48 403.4 309.64 403.8 310.03 404.2 309.70 404.6 309.04 L404.6 311.56 404.2 310.90 403.8 310.57 403.4 310.96 403.0 311.12 402.6 310.77 402.2 310.63 401.8 310.83 401.4 311.07 401.0 311.00 400.6 310.61 400.2 310.50 399.8 310.50 399.4 310.50 399.0 310.55 398.6 310.62 398.2 310.55 397.8 310.50 397.4 310.50 397.0 310.50 396.6 310.50 396.2 310.50 395.8 310.50 395.4 310.51 395.0 310.56 394.6 310.59 394.2 310.50 393.8 310.50 393.4 310.50 393.0 310.50 392.6 310.50 392.2 310.56 391.8 310.57Z" fill="#5e7a3a"/><path d="M392.0 275.3h38" stroke="#5a6068" stroke-width="2" stroke-dasharray="1.2 0.8 0.6 1.6 3.2 0.9 3.2 0.9 3.2 0.9 4.4 0.9 3.2 0.9 3.2 40"/><rect x="416.7" y="274.2" width="5" height="2.3" fill="#43c0e6"/><path d="M422.7 275.3h7.6" stroke="#5a6068" stroke-width="2" stroke-dasharray="2.1 0.7"/><rect x="471.6" y="280.1" width="50.0" height="40.6" fill="#efe6c4"/><path d="M471.6 300.3H521.6" stroke="#e2c4b0" stroke-width="0.7"/><path d="M471.6 289.3H492.6" stroke="#8a9430" stroke-width="0.5"/><path d="M492.6 289.3H521.6" stroke="#6a55e0" stroke-width="0.5"/><path d="M472.1 289.02 472.5 289.02 472.9 288.79 473.3 288.49 473.7 289.00 474.1 289.02 474.5 289.02 474.9 289.02 475.3 289.02 475.7 289.02 476.1 289.02 476.5 288.77 476.9 288.11 477.3 287.57 477.7 287.56 478.1 287.89 478.5 288.24 478.9 287.99 479.3 287.52 479.7 286.98 480.1 286.94 480.5 287.29 480.9 287.96 481.3 288.15 481.7 288.06 482.1 287.37 482.5 287.01 482.9 287.13 483.3 287.85 483.7 288.34 484.1 288.31 484.5 287.70 484.9 287.15 485.3 286.86 485.7 287.51 486.1 288.19 486.5 288.39 486.9 288.29 487.3 287.80 487.7 287.50 488.1 287.94 488.5 288.57 488.9 288.52 489.3 287.57 489.7 286.38 490.1 286.55 490.5 287.03 490.9 285.75 491.3 285.31 491.7 286.65 492.1 285.70 492.5 280.58 492.9 282.26 493.3 286.37 493.7 285.77 494.1 284.83 494.5 286.45 494.9 287.46 495.3 287.05 495.7 286.28 496.1 286.31 496.5 287.63 496.9 287.96 497.3 286.72 497.7 285.22 498.1 285.57 498.5 286.54 498.9 287.28 499.3 287.60 499.7 287.16 500.1 286.64 500.5 286.63 500.9 287.57 501.3 288.68 501.7 288.98 502.1 288.75 502.5 288.19 502.9 287.26 503.3 286.89 503.7 286.85 504.1 287.68 504.5 288.26 504.9 288.18 505.3 287.92 505.7 287.85 506.1 288.22 506.5 288.72 506.9 289.02 507.3 289.02 507.7 288.65 508.1 288.14 508.5 288.01 508.9 288.38 509.3 288.84 509.7 289.02 510.1 288.67 510.5 288.46 510.9 288.87 511.3 289.02 L511.3 289.58 510.9 289.73 510.5 290.14 510.1 289.93 509.7 289.58 509.3 289.76 508.9 290.22 508.5 290.59 508.1 290.46 507.7 289.95 507.3 289.58 506.9 289.58 506.5 289.88 506.1 290.38 505.7 290.75 505.3 290.68 504.9 290.42 504.5 290.34 504.1 290.92 503.7 291.75 503.3 291.71 502.9 291.34 502.5 290.41 502.1 289.85 501.7 289.62 501.3 289.92 500.9 291.03 500.5 291.97 500.1 291.96 499.7 291.44 499.3 291.00 498.9 291.32 498.5 292.06 498.1 293.03 497.7 293.38 497.3 291.88 496.9 290.64 496.5 290.97 496.1 292.29 495.7 292.32 495.3 291.55 494.9 291.14 494.5 292.15 494.1 293.77 493.7 292.83 493.3 292.23 492.9 296.34 492.5 298.02 492.1 292.90 491.7 291.95 491.3 293.29 490.9 292.85 490.5 291.57 490.1 292.05 489.7 292.22 489.3 291.03 488.9 290.08 488.5 290.03 488.1 290.66 487.7 291.10 487.3 290.80 486.9 290.31 486.5 290.21 486.1 290.41 485.7 291.09 485.3 291.74 484.9 291.45 484.5 290.90 484.1 290.29 483.7 290.26 483.3 290.75 482.9 291.47 482.5 291.59 482.1 291.23 481.7 290.54 481.3 290.45 480.9 290.64 480.5 291.31 480.1 291.66 479.7 291.62 479.3 291.08 478.9 290.61 478.5 290.36 478.1 290.71 477.7 291.04 477.3 291.03 476.9 290.49 476.5 289.83 476.1 289.58 475.7 289.58 475.3 289.58 474.9 289.58 474.5 289.58 474.1 289.58 473.7 289.60 473.3 290.11 472.9 289.81 472.5 289.58 472.1 289.58Z" fill="#4c4c3a"/><path d="M500.5 287.70 500.9 288.26 501.3 288.93 501.7 289.00 502.1 288.97 502.5 288.63 502.9 288.08 503.3 287.85 503.7 287.83 504.1 288.33 504.5 288.68 504.9 288.63 505.3 288.47 505.7 288.43 506.1 288.65 506.5 288.95 506.9 289.00 507.3 289.00 507.7 288.91 508.1 288.60 508.5 288.52 508.9 288.75 L508.9 289.85 508.5 290.08 508.1 290.00 507.7 289.69 507.3 289.60 506.9 289.60 506.5 289.65 506.1 289.95 505.7 290.17 505.3 290.13 504.9 289.97 504.5 289.92 504.1 290.27 503.7 290.77 503.3 290.75 502.9 290.52 502.5 289.97 502.1 289.63 501.7 289.60 501.3 289.67 500.9 290.34 500.5 290.90Z" fill="#5a3fd0"/><path d="M472.9 289.10 473.3 289.10 473.7 289.10 474.1 289.10 474.5 289.10 474.9 289.10 475.3 289.10 475.7 289.10 476.1 289.10 476.5 289.10 476.9 289.04 477.3 288.92 477.7 288.92 478.1 288.99 478.5 289.07 478.9 289.01 479.3 288.91 479.7 288.79 480.1 288.78 480.5 288.86 480.9 289.01 481.3 289.05 481.7 289.03 482.1 288.88 482.5 288.80 482.9 288.82 483.3 288.98 483.7 289.09 484.1 289.08 484.5 288.95 484.9 288.83 485.3 288.76 485.7 288.91 486.1 289.06 486.5 289.10 486.9 289.08 487.3 288.97 487.7 288.90 488.1 289.00 488.5 289.10 488.9 289.10 489.3 288.92 L489.3 289.68 488.9 289.50 488.5 289.50 488.1 289.60 487.7 289.70 487.3 289.63 486.9 289.52 486.5 289.50 486.1 289.54 485.7 289.69 485.3 289.84 484.9 289.77 484.5 289.65 484.1 289.52 483.7 289.51 483.3 289.62 482.9 289.78 482.5 289.80 482.1 289.72 481.7 289.57 481.3 289.55 480.9 289.59 480.5 289.74 480.1 289.82 479.7 289.81 479.3 289.69 478.9 289.59 478.5 289.53 478.1 289.61 477.7 289.68 477.3 289.68 476.9 289.56 476.5 289.50 476.1 289.50 475.7 289.50 475.3 289.50 474.9 289.50 474.5 289.50 474.1 289.50 473.7 289.50 473.3 289.50 472.9 289.50Z" fill="#5e7a3a"/><path d="M471.6 310.3H492.6" stroke="#8a9430" stroke-width="0.5"/><path d="M492.6 310.3H521.6" stroke="#6a55e0" stroke-width="0.5"/><path d="M472.1 310.02 472.5 310.02 472.9 309.79 473.3 309.49 473.7 310.00 474.1 310.02 474.5 310.02 474.9 310.02 475.3 310.02 475.7 310.02 476.1 310.02 476.5 309.77 476.9 309.11 477.3 308.57 477.7 308.56 478.1 308.89 478.5 309.24 478.9 308.99 479.3 308.52 479.7 307.98 480.1 307.94 480.5 308.29 480.9 308.96 481.3 309.15 481.7 309.06 482.1 308.37 482.5 308.01 482.9 308.13 483.3 308.85 483.7 309.34 484.1 309.31 484.5 308.70 484.9 308.15 485.3 307.86 485.7 308.51 486.1 309.19 486.5 309.39 486.9 309.29 487.3 308.80 487.7 308.50 488.1 308.94 488.5 309.57 488.9 309.52 489.3 308.57 489.7 307.38 490.1 307.55 490.5 308.03 490.9 306.75 491.3 306.31 491.7 307.65 492.1 306.70 492.5 301.58 492.9 303.26 493.3 307.37 493.7 306.77 494.1 305.83 494.5 307.45 494.9 308.46 495.3 308.05 495.7 307.28 496.1 307.31 496.5 308.63 496.9 308.96 497.3 307.72 497.7 306.22 498.1 306.57 498.5 307.54 498.9 308.28 499.3 308.60 499.7 308.16 500.1 307.64 500.5 307.63 500.9 308.57 501.3 309.68 501.7 309.98 502.1 309.75 502.5 309.19 502.9 308.26 503.3 307.89 503.7 307.85 504.1 308.68 504.5 309.26 504.9 309.18 505.3 308.92 505.7 308.85 506.1 309.22 506.5 309.72 506.9 310.02 507.3 310.02 507.7 309.65 508.1 309.14 508.5 309.01 508.9 309.38 509.3 309.84 509.7 310.02 510.1 309.67 510.5 309.46 510.9 309.87 511.3 310.02 L511.3 310.58 510.9 310.73 510.5 311.14 510.1 310.93 509.7 310.58 509.3 310.76 508.9 311.22 508.5 311.59 508.1 311.46 507.7 310.95 507.3 310.58 506.9 310.58 506.5 310.88 506.1 311.38 505.7 311.75 505.3 311.68 504.9 311.42 504.5 311.34 504.1 311.92 503.7 312.75 503.3 312.71 502.9 312.34 502.5 311.41 502.1 310.85 501.7 310.62 501.3 310.92 500.9 312.03 500.5 312.97 500.1 312.96 499.7 312.44 499.3 312.00 498.9 312.32 498.5 313.06 498.1 314.03 497.7 314.38 497.3 312.88 496.9 311.64 496.5 311.97 496.1 313.29 495.7 313.32 495.3 312.55 494.9 312.14 494.5 313.15 494.1 314.77 493.7 313.83 493.3 313.23 492.9 317.34 492.5 319.02 492.1 313.90 491.7 312.95 491.3 314.29 490.9 313.85 490.5 312.57 490.1 313.05 489.7 313.22 489.3 312.03 488.9 311.08 488.5 311.03 488.1 311.66 487.7 312.10 487.3 311.80 486.9 311.31 486.5 311.21 486.1 311.41 485.7 312.09 485.3 312.74 484.9 312.45 484.5 311.90 484.1 311.29 483.7 311.26 483.3 311.75 482.9 312.47 482.5 312.59 482.1 312.23 481.7 311.54 481.3 311.45 480.9 311.64 480.5 312.31 480.1 312.66 479.7 312.62 479.3 312.08 478.9 311.61 478.5 311.36 478.1 311.71 477.7 312.04 477.3 312.03 476.9 311.49 476.5 310.83 476.1 310.58 475.7 310.58 475.3 310.58 474.9 310.58 474.5 310.58 474.1 310.58 473.7 310.60 473.3 311.11 472.9 310.81 472.5 310.58 472.1 310.58Z" fill="#4c4c3a"/><path d="M500.5 308.70 500.9 309.26 501.3 309.93 501.7 310.00 502.1 309.97 502.5 309.63 502.9 309.08 503.3 308.85 503.7 308.83 504.1 309.33 504.5 309.68 504.9 309.63 505.3 309.47 505.7 309.43 506.1 309.65 506.5 309.95 506.9 310.00 507.3 310.00 507.7 309.91 508.1 309.60 508.5 309.52 508.9 309.75 L508.9 310.85 508.5 311.08 508.1 311.00 507.7 310.69 507.3 310.60 506.9 310.60 506.5 310.65 506.1 310.95 505.7 311.17 505.3 311.13 504.9 310.97 504.5 310.92 504.1 311.27 503.7 311.77 503.3 311.75 502.9 311.52 502.5 310.97 502.1 310.63 501.7 310.60 501.3 310.67 500.9 311.34 500.5 311.90Z" fill="#5a3fd0"/><path d="M472.9 310.10 473.3 310.10 473.7 310.10 474.1 310.10 474.5 310.10 474.9 310.10 475.3 310.10 475.7 310.10 476.1 310.10 476.5 310.10 476.9 310.04 477.3 309.92 477.7 309.92 478.1 309.99 478.5 310.07 478.9 310.01 479.3 309.91 479.7 309.79 480.1 309.78 480.5 309.86 480.9 310.01 481.3 310.05 481.7 310.03 482.1 309.88 482.5 309.80 482.9 309.82 483.3 309.98 483.7 310.09 484.1 310.08 484.5 309.95 484.9 309.83 485.3 309.76 485.7 309.91 486.1 310.06 486.5 310.10 486.9 310.08 487.3 309.97 487.7 309.90 488.1 310.00 488.5 310.10 488.9 310.10 489.3 309.92 L489.3 310.68 488.9 310.50 488.5 310.50 488.1 310.60 487.7 310.70 487.3 310.63 486.9 310.52 486.5 310.50 486.1 310.54 485.7 310.69 485.3 310.84 484.9 310.77 484.5 310.65 484.1 310.52 483.7 310.51 483.3 310.62 482.9 310.78 482.5 310.80 482.1 310.72 481.7 310.57 481.3 310.55 480.9 310.59 480.5 310.74 480.1 310.82 479.7 310.81 479.3 310.69 478.9 310.59 478.5 310.53 478.1 310.61 477.7 310.68 477.3 310.68 476.9 310.56 476.5 310.50 476.1 310.50 475.7 310.50 475.3 310.50 474.9 310.50 474.5 310.50 474.1 310.50 473.7 310.50 473.3 310.50 472.9 310.50Z" fill="#5e7a3a"/><path d="M473.1 275.3h38" stroke="#5a6068" stroke-width="2" stroke-dasharray="1.2 0.8 0.6 1.6 3.2 0.9 3.2 0.9 3.2 0.9 4.4 0.9 3.2 0.9 3.2 40"/><rect x="497.8" y="274.2" width="5" height="2.3" fill="#43c0e6"/><path d="M503.8 275.3h7.6" stroke="#5a6068" stroke-width="2" stroke-dasharray="2.1 0.7"/><rect x="560.6" y="280.1" width="50.10000000000002" height="40.6" fill="#efe6c4"/><path d="M560.6 300.3H610.7" stroke="#e2c4b0" stroke-width="0.7"/><path d="M560.6 289.3H583.9" stroke="#8a9430" stroke-width="0.5"/><path d="M583.9 289.3H610.7" stroke="#6a55e0" stroke-width="0.5"/><path d="M561.1 289.02 561.5 288.81 561.9 288.58 562.3 289.02 562.7 289.02 563.1 289.02 563.5 289.02 563.9 289.02 564.3 289.02 564.7 289.02 565.1 289.02 565.5 289.02 565.9 289.02 566.3 289.02 566.7 289.02 567.1 289.02 567.5 289.02 567.9 289.02 568.3 289.02 568.7 288.89 569.1 288.40 569.5 287.87 569.9 287.72 570.3 287.85 570.7 287.65 571.1 286.90 571.5 286.87 571.9 287.23 572.3 288.07 572.7 288.15 573.1 287.74 573.5 287.52 573.9 288.18 574.3 288.83 574.7 289.02 575.1 288.90 575.5 288.39 575.9 287.66 576.3 287.69 576.7 287.84 577.1 287.71 577.5 287.12 577.9 287.19 578.3 287.49 578.7 288.08 579.1 288.07 579.5 288.03 579.9 288.30 580.3 288.66 580.7 289.02 581.1 289.02 581.5 289.00 581.9 288.10 582.3 286.71 582.7 286.94 583.1 287.79 583.5 284.63 583.9 280.10 584.3 284.05 584.7 286.97 585.1 285.78 585.5 285.75 585.9 287.39 586.3 288.07 586.7 287.69 587.1 286.87 587.5 287.48 587.9 288.09 588.3 288.46 588.7 287.55 589.1 286.10 589.5 285.70 589.9 286.29 590.3 287.38 590.7 287.94 591.1 287.40 591.5 286.91 591.9 287.40 592.3 288.33 592.7 288.58 593.1 288.16 593.5 287.26 593.9 286.63 594.3 287.03 594.7 287.55 595.1 288.05 595.5 288.11 595.9 287.75 596.3 288.18 596.7 288.53 597.1 288.78 597.5 288.33 597.9 287.86 598.3 288.45 598.7 288.92 599.1 289.02 599.5 288.90 599.9 288.58 600.3 288.77 600.7 289.02 L600.7 289.58 600.3 289.83 599.9 290.02 599.5 289.70 599.1 289.58 598.7 289.68 598.3 290.15 597.9 290.74 597.5 290.27 597.1 289.82 596.7 290.07 596.3 290.42 595.9 290.85 595.5 290.49 595.1 290.55 594.7 291.05 594.3 291.57 593.9 291.97 593.5 291.34 593.1 290.44 592.7 290.02 592.3 290.27 591.9 291.20 591.5 291.69 591.1 291.20 590.7 290.66 590.3 291.22 589.9 292.31 589.5 292.90 589.1 292.50 588.7 291.05 588.3 290.14 587.9 290.51 587.5 291.12 587.1 291.73 586.7 290.91 586.3 290.53 585.9 291.21 585.5 292.85 585.1 292.82 584.7 291.63 584.3 294.55 583.9 298.50 583.5 293.97 583.1 290.81 582.7 291.66 582.3 291.89 581.9 290.50 581.5 289.60 581.1 289.58 580.7 289.58 580.3 289.94 579.9 290.30 579.5 290.57 579.1 290.53 578.7 290.52 578.3 291.11 577.9 291.41 577.5 291.48 577.1 290.89 576.7 290.76 576.3 290.91 575.9 290.94 575.5 290.21 575.1 289.70 574.7 289.58 574.3 289.77 573.9 290.42 573.5 291.08 573.1 290.86 572.7 290.45 572.3 290.53 571.9 291.37 571.5 291.73 571.1 291.70 570.7 290.95 570.3 290.75 569.9 290.88 569.5 290.73 569.1 290.20 568.7 289.71 568.3 289.58 567.9 289.58 567.5 289.58 567.1 289.58 566.7 289.58 566.3 289.58 565.9 289.58 565.5 289.58 565.1 289.58 564.7 289.58 564.3 289.58 563.9 289.58 563.5 289.58 563.1 289.58 562.7 289.58 562.3 289.58 561.9 290.02 561.5 289.79 561.1 289.58Z" fill="#4c4c3a"/><path d="M592.7 288.87 593.1 288.62 593.5 288.07 593.9 287.70 594.3 287.94 594.7 288.25 595.1 288.55 595.5 288.59 595.9 288.37 596.3 288.63 596.7 288.84 597.1 288.99 597.5 288.72 597.9 288.43 598.3 288.79 598.7 289.00 L598.7 289.60 598.3 289.81 597.9 290.17 597.5 289.88 597.1 289.61 596.7 289.76 596.3 289.97 595.9 290.23 595.5 290.01 595.1 290.05 594.7 290.35 594.3 290.66 593.9 290.90 593.5 290.53 593.1 289.98 592.7 289.73Z" fill="#5a3fd0"/><path d="M561.9 289.10 562.3 289.10 562.7 289.10 563.1 289.10 563.5 289.10 563.9 289.10 564.3 289.10 564.7 289.10 565.1 289.10 565.5 289.10 565.9 289.10 566.3 289.10 566.7 289.10 567.1 289.10 567.5 289.10 567.9 289.10 568.3 289.10 568.7 289.10 569.1 289.10 569.5 288.98 569.9 288.95 570.3 288.98 570.7 288.94 571.1 288.77 571.5 288.76 571.9 288.84 572.3 289.03 572.7 289.05 573.1 288.96 573.5 288.91 573.9 289.05 574.3 289.10 574.7 289.10 575.1 289.10 575.5 289.10 575.9 288.94 576.3 288.95 576.7 288.98 577.1 288.95 577.5 288.82 577.9 288.84 578.3 288.90 578.7 289.03 579.1 289.03 579.5 289.02 579.9 289.08 580.3 289.10 580.7 289.10 L580.7 289.50 580.3 289.50 579.9 289.52 579.5 289.58 579.1 289.57 578.7 289.57 578.3 289.70 577.9 289.76 577.5 289.78 577.1 289.65 576.7 289.62 576.3 289.65 575.9 289.66 575.5 289.50 575.1 289.50 574.7 289.50 574.3 289.50 573.9 289.55 573.5 289.69 573.1 289.64 572.7 289.55 572.3 289.57 571.9 289.76 571.5 289.84 571.1 289.83 570.7 289.66 570.3 289.62 569.9 289.65 569.5 289.62 569.1 289.50 568.7 289.50 568.3 289.50 567.9 289.50 567.5 289.50 567.1 289.50 566.7 289.50 566.3 289.50 565.9 289.50 565.5 289.50 565.1 289.50 564.7 289.50 564.3 289.50 563.9 289.50 563.5 289.50 563.1 289.50 562.7 289.50 562.3 289.50 561.9 289.50Z" fill="#5e7a3a"/><path d="M560.6 310.3H583.9" stroke="#8a9430" stroke-width="0.5"/><path d="M583.9 310.3H610.7" stroke="#6a55e0" stroke-width="0.5"/><path d="M561.1 310.02 561.5 309.81 561.9 309.58 562.3 310.02 562.7 310.02 563.1 310.02 563.5 310.02 563.9 310.02 564.3 310.02 564.7 310.02 565.1 310.02 565.5 310.02 565.9 310.02 566.3 310.02 566.7 310.02 567.1 310.02 567.5 310.02 567.9 310.02 568.3 310.02 568.7 309.89 569.1 309.40 569.5 308.87 569.9 308.72 570.3 308.85 570.7 308.65 571.1 307.90 571.5 307.87 571.9 308.23 572.3 309.07 572.7 309.15 573.1 308.74 573.5 308.52 573.9 309.18 574.3 309.83 574.7 310.02 575.1 309.90 575.5 309.39 575.9 308.66 576.3 308.69 576.7 308.84 577.1 308.71 577.5 308.12 577.9 308.19 578.3 308.49 578.7 309.08 579.1 309.07 579.5 309.03 579.9 309.30 580.3 309.66 580.7 310.02 581.1 310.02 581.5 310.00 581.9 309.10 582.3 307.71 582.7 307.94 583.1 308.79 583.5 305.63 583.9 301.10 584.3 305.05 584.7 307.97 585.1 306.78 585.5 306.75 585.9 308.39 586.3 309.07 586.7 308.69 587.1 307.87 587.5 308.48 587.9 309.09 588.3 309.46 588.7 308.55 589.1 307.10 589.5 306.70 589.9 307.29 590.3 308.38 590.7 308.94 591.1 308.40 591.5 307.91 591.9 308.40 592.3 309.33 592.7 309.58 593.1 309.16 593.5 308.26 593.9 307.63 594.3 308.03 594.7 308.55 595.1 309.05 595.5 309.11 595.9 308.75 596.3 309.18 596.7 309.53 597.1 309.78 597.5 309.33 597.9 308.86 598.3 309.45 598.7 309.92 599.1 310.02 599.5 309.90 599.9 309.58 600.3 309.77 600.7 310.02 L600.7 310.58 600.3 310.83 599.9 311.02 599.5 310.70 599.1 310.58 598.7 310.68 598.3 311.15 597.9 311.74 597.5 311.27 597.1 310.82 596.7 311.07 596.3 311.42 595.9 311.85 595.5 311.49 595.1 311.55 594.7 312.05 594.3 312.57 593.9 312.97 593.5 312.34 593.1 311.44 592.7 311.02 592.3 311.27 591.9 312.20 591.5 312.69 591.1 312.20 590.7 311.66 590.3 312.22 589.9 313.31 589.5 313.90 589.1 313.50 588.7 312.05 588.3 311.14 587.9 311.51 587.5 312.12 587.1 312.73 586.7 311.91 586.3 311.53 585.9 312.21 585.5 313.85 585.1 313.82 584.7 312.63 584.3 315.55 583.9 319.50 583.5 314.97 583.1 311.81 582.7 312.66 582.3 312.89 581.9 311.50 581.5 310.60 581.1 310.58 580.7 310.58 580.3 310.94 579.9 311.30 579.5 311.57 579.1 311.53 578.7 311.52 578.3 312.11 577.9 312.41 577.5 312.48 577.1 311.89 576.7 311.76 576.3 311.91 575.9 311.94 575.5 311.21 575.1 310.70 574.7 310.58 574.3 310.77 573.9 311.42 573.5 312.08 573.1 311.86 572.7 311.45 572.3 311.53 571.9 312.37 571.5 312.73 571.1 312.70 570.7 311.95 570.3 311.75 569.9 311.88 569.5 311.73 569.1 311.20 568.7 310.71 568.3 310.58 567.9 310.58 567.5 310.58 567.1 310.58 566.7 310.58 566.3 310.58 565.9 310.58 565.5 310.58 565.1 310.58 564.7 310.58 564.3 310.58 563.9 310.58 563.5 310.58 563.1 310.58 562.7 310.58 562.3 310.58 561.9 311.02 561.5 310.79 561.1 310.58Z" fill="#4c4c3a"/><path d="M592.7 309.87 593.1 309.62 593.5 309.07 593.9 308.70 594.3 308.94 594.7 309.25 595.1 309.55 595.5 309.59 595.9 309.37 596.3 309.63 596.7 309.84 597.1 309.99 597.5 309.72 597.9 309.43 598.3 309.79 598.7 310.00 L598.7 310.60 598.3 310.81 597.9 311.17 597.5 310.88 597.1 310.61 596.7 310.76 596.3 310.97 595.9 311.23 595.5 311.01 595.1 311.05 594.7 311.35 594.3 311.66 593.9 311.90 593.5 311.53 593.1 310.98 592.7 310.73Z" fill="#5a3fd0"/><path d="M561.9 310.10 562.3 310.10 562.7 310.10 563.1 310.10 563.5 310.10 563.9 310.10 564.3 310.10 564.7 310.10 565.1 310.10 565.5 310.10 565.9 310.10 566.3 310.10 566.7 310.10 567.1 310.10 567.5 310.10 567.9 310.10 568.3 310.10 568.7 310.10 569.1 310.10 569.5 309.98 569.9 309.95 570.3 309.98 570.7 309.94 571.1 309.77 571.5 309.76 571.9 309.84 572.3 310.03 572.7 310.05 573.1 309.96 573.5 309.91 573.9 310.05 574.3 310.10 574.7 310.10 575.1 310.10 575.5 310.10 575.9 309.94 576.3 309.95 576.7 309.98 577.1 309.95 577.5 309.82 577.9 309.84 578.3 309.90 578.7 310.03 579.1 310.03 579.5 310.02 579.9 310.08 580.3 310.10 580.7 310.10 L580.7 310.50 580.3 310.50 579.9 310.52 579.5 310.58 579.1 310.57 578.7 310.57 578.3 310.70 577.9 310.76 577.5 310.78 577.1 310.65 576.7 310.62 576.3 310.65 575.9 310.66 575.5 310.50 575.1 310.50 574.7 310.50 574.3 310.50 573.9 310.55 573.5 310.69 573.1 310.64 572.7 310.55 572.3 310.57 571.9 310.76 571.5 310.84 571.1 310.83 570.7 310.66 570.3 310.62 569.9 310.65 569.5 310.62 569.1 310.50 568.7 310.50 568.3 310.50 567.9 310.50 567.5 310.50 567.1 310.50 566.7 310.50 566.3 310.50 565.9 310.50 565.5 310.50 565.1 310.50 564.7 310.50 564.3 310.50 563.9 310.50 563.5 310.50 563.1 310.50 562.7 310.50 562.3 310.50 561.9 310.50Z" fill="#5e7a3a"/><path d="M562.1 275.3h38" stroke="#5a6068" stroke-width="2" stroke-dasharray="1.2 0.8 0.6 1.6 3.2 0.9 3.2 0.9 3.2 0.9 4.4 0.9 3.2 0.9 3.2 40"/><rect x="586.8000000000001" y="274.2" width="5" height="2.3" fill="#43c0e6"/><path d="M592.8000000000001 275.3h7.6" stroke="#5a6068" stroke-width="2" stroke-dasharray="2.1 0.7"/><path d="M459 168.7V573" stroke="#d4d4d4" stroke-width="1.3"/><path d="M460.3 222V573" stroke="#0c0c0e" stroke-width="0.9" opacity=".55"/><rect x="286.4" y="226.6" width="330.2" height="45.1" fill="none" stroke="#19c3ea" stroke-width="2.8"/><rect x="314.9" y="278.4" width="297.7" height="46.8" fill="none" stroke="#19c3ea" stroke-width="2.8"/><circle cx="450.8" cy="246.5" r="13.1" fill="#1e9ad3"/><text x="450.6" y="251.6" font-size="14.4" font-weight="bold" fill="#fff" text-anchor="middle" font-family="Liberation Sans, sans-serif">1</text><circle cx="450.8" cy="302.6" r="13.1" fill="#1e9ad3"/><text x="450.6" y="307.70000000000005" font-size="14.4" font-weight="bold" fill="#fff" text-anchor="middle" font-family="Liberation Sans, sans-serif">2</text></svg>
<div class="a" style="left:618.3px;top:168.7px;width:8.4px;height:404.3px;background:#2e2e30;"></div>
<div class="a" style="left:626.7px;top:27px;width:2.9px;height:555px;background:#333;"></div>
<div class="a" style="left:620px;top:178.7px;width:4.8px;height:364.6px;background:#525252;border-radius:2.4px;"></div>
<div class="a" style="left:282px;top:573px;width:344.7px;height:9px;background:#333;"></div>
<svg class="a" style="left:618.9px;top:169.5px" width="7" height="7"><circle cx="3.5" cy="3.5" r="2.7" fill="#111" stroke="#555" stroke-width="0.5"/><path d="M3.5 2.3L5 4.6H2z" fill="#eee"/></svg>
<svg class="a" style="left:618.9px;top:546.2px" width="7" height="7"><circle cx="3.5" cy="3.5" r="2.7" fill="#111" stroke="#555" stroke-width="0.5"/><path d="M3.5 4.7L5 2.4H2z" fill="#eee"/></svg>
<svg class="a" style="left:282.5px;top:573.3px" width="7" height="7"><circle cx="3.5" cy="3.5" r="2.7" fill="#111" stroke="#555" stroke-width="0.5"/><path d="M2.3 3.5L4.6 2v3z" fill="#eee"/></svg>
<svg class="a" style="left:591.5px;top:573.3px" width="7" height="7"><circle cx="3.5" cy="3.5" r="2.7" fill="#111" stroke="#555" stroke-width="0.5"/><path d="M4.7 3.5L2.4 2v3z" fill="#eee"/></svg>
<svg class="a" style="left:618.8px;top:554.5px" width="7" height="7"><path d="M1.4 3.5h4.2M3.5 1.4v4.2" stroke="#c8c8c8" stroke-width="1.3"/></svg>
<svg class="a" style="left:618.8px;top:564.9px" width="7" height="7"><path d="M1.4 3.5h4.2" stroke="#c8c8c8" stroke-width="1.3"/></svg>
<svg class="a" style="left:600.2px;top:573.2px" width="7" height="7"><path d="M1.4 3.5h4.2M3.5 1.4v4.2" stroke="#c8c8c8" stroke-width="1.3"/></svg>
<svg class="a" style="left:610.5px;top:573.2px" width="7" height="7"><path d="M1.4 3.5h4.2" stroke="#c8c8c8" stroke-width="1.3"/></svg>
<svg class="a" style="left:316.5px;top:574px" width="10" height="6"><rect x="0.5" y="0.5" width="8" height="4.2" rx="2.1" fill="#1a1a1a" stroke="#d0d0d0" stroke-width="0.6"/><path d="M2 2.6l1.6-1.1v2.2zM7 2.6l-1.6-1.1v2.2z" fill="#ddd"/><path d="M4.5 1v3.2" stroke="#ddd" stroke-width="0.5"/></svg>
<div class="a" style="left:627.3px;top:0;width:272.7px;height:27px;background:#343434;"></div>
<div class="t" style="left:629.5px;top:14.6px;font-size:5.5px;color:#8c8c8c;">Selection:</div>
<div class="a" style="left:656px;top:12.3px;width:39.5px;height:9.2px;background:#313131;border-radius:1px;"></div>
<div class="a" style="left:698.3px;top:12.3px;width:39.5px;height:9.2px;background:#313131;border-radius:1px;"></div>
<div class="a" style="left:741px;top:12.3px;width:39.5px;height:9.2px;background:#313131;border-radius:1px;"></div>
<div class="t" style="left:664.3px;top:14.5px;font-size:5.7px;color:#9a9a9a;">0:00.000</div>
<div class="t" style="left:707px;top:14.5px;font-size:5.7px;color:#9a9a9a;">0:00.000</div>
<div class="t" style="left:750px;top:14.5px;font-size:5.7px;color:#9a9a9a;">0:00.000</div>
<div class="a" style="left:784px;top:8.3px;width:26.4px;height:18.5px;background:#2d2d2d;"></div>
<div class="a" style="left:811.6px;top:8.3px;width:19.8px;height:18.5px;background:#2d2d2d;"></div>
<div class="a" style="left:832.8px;top:8.3px;width:28px;height:18.5px;background:#2d2d2d;"></div>
<div class="t" style="left:757px;width:80px;text-align:center;top:10.7px;font-size:4.2px;color:#777;">BPM</div>
<div class="t" style="left:757px;width:80px;text-align:center;top:19.9px;font-size:4.6px;color:#8a8a8a;">120</div>
<div class="t" style="left:781.5px;width:80px;text-align:center;top:15.9px;font-size:4.6px;color:#8a8a8a;">4/4</div>
<svg class="a" style="left:835px;top:11.2px" width="9" height="5"><path d="M0.5 4l2.2-3 1.8 2 1.6-1.3" fill="none" stroke="#777" stroke-width="0.6"/></svg>
<div class="t" style="left:843.3px;top:11.7px;font-size:3.9px;color:#777;letter-spacing:0.05px;">GLOBAL</div>
<div class="a" style="left:835.7px;top:17.3px;width:22.7px;height:7.4px;background:#272727;border-radius:1px;"></div>
<div class="t" style="left:837.2px;top:17.7px;font-size:6px;color:#5e5e5e;">none</div>
<svg class="a" style="left:852px;top:17.6px" width="7" height="7"><circle cx="3.3" cy="3.4" r="2.7" fill="#c8c8c8"/><path d="M1.9 2.6h2.8L3.3 4.8z" fill="#222"/></svg>
<svg class="a" style="left:863.5px;top:9px" width="17" height="17"><circle cx="8.5" cy="8.3" r="7.4" fill="#2c2c2c" stroke="#272727" stroke-width="0.8"/><path d="M8.5 2v5" stroke="#4c4c4c" stroke-width="0.8"/></svg>
<div class="t" style="left:849.3px;width:80px;text-align:center;top:10px;font-size:4.8px;color:#7c7c7c;">Rate:</div>
<div class="t" style="left:849.7px;width:80px;text-align:center;top:19.2px;font-size:4.5px;color:#747474;">1.0</div>
<div class="a" style="left:866px;top:0;width:32px;height:1.3px;background:#b8203a;"></div>
<div class="a" style="left:866px;top:1.3px;width:26px;height:6.7px;background:#7e2a3c;"></div>
<div class="a" style="left:892px;top:1.3px;width:7px;height:6.7px;background:#6a5f63;"></div>
<svg class="a" style="left:893px;top:2px" width="6" height="6"><circle cx="2.7" cy="3" r="1.7" fill="none" stroke="#b04050" stroke-width="0.5"/><path d="M2.7 0.8v1.8" stroke="#b04050" stroke-width="0.5"/></svg>
<div class="t" style="left:867.8px;top:2.9px;font-size:3.7px;color:#f6e8ec;">MONITOR FX</div>
<div class="a" style="left:889.8px;top:6.3px;width:3.8px;height:3.8px;border-radius:2px;background:#f09a20;"></div>
<div class="a" style="left:629.3px;top:27px;width:262.7px;height:555px;background:#3a3c41;"></div>
<div class="a" style="left:892px;top:27px;width:8px;height:555px;background:#333;"></div>
<div class="a" style="left:636.6px;top:37.4px;width:101px;height:11px;background:#2c2c2e;border:0.6px solid #4a4a4c;box-sizing:border-box;"></div>
<div class="btn" style="left:742.8px;top:37.3px;width:31.6px;height:10.8px;background:#6b6b6d;"></div>
<div class="btn" style="left:776.5px;top:37.3px;width:54.5px;height:10.8px;background:#6b6b6d;"></div>
<div class="t" style="left:718.6px;width:80px;text-align:center;top:40.6px;font-size:5.5px;color:#f0f0f0;">Clear</div>
<div class="t" style="left:763.8px;width:80px;text-align:center;top:40.6px;font-size:5.5px;color:#f0f0f0;">Render Matrix...</div>
<svg class="a" style="left:837px;top:30.3px" width="8" height="8"><rect x="0.2" y="0.2" width="7.2" height="7.2" rx="1.2" fill="#1a74e8"/><path d="M1.8 3.9l1.5 1.6 2.6-3.4" fill="none" stroke="#fff" stroke-width="1"/></svg>
<div class="t" style="left:847.6px;top:31.6px;font-size:5.5px;color:#e6e6e6;">Regions</div>
<svg class="a" style="left:837px;top:39.2px" width="8" height="8"><rect x="0.2" y="0.2" width="7.2" height="7.2" rx="1.2" fill="#1a74e8"/><path d="M1.8 3.9l1.5 1.6 2.6-3.4" fill="none" stroke="#fff" stroke-width="1"/></svg>
<div class="t" style="left:847.6px;top:41.0px;font-size:5.5px;color:#e6e6e6;">Markers</div>
<svg class="a" style="left:837px;top:48.1px" width="8" height="8"><rect x="0.2" y="0.2" width="7.2" height="7.2" rx="1.2" fill="#636366"/></svg>
<div class="t" style="left:847.6px;top:49.800000000000004px;font-size:5.5px;color:#e6e6e6;">Take markers</div>
<div class="a" style="left:635.8px;top:59px;width:250.2px;height:518.7px;background:#2b3038;"></div>
<div class="a" style="left:636px;top:59px;width:250px;height:13.4px;background:#262626;z-index:3;"></div>
<div class="a" style="left:657px;top:61px;width:1px;height:9.5px;background:#3a3a3a;z-index:3;"></div>
<div class="a" style="left:685px;top:61px;width:1px;height:9.5px;background:#3a3a3a;z-index:3;"></div>
<div class="t" style="left:676.5px;top:63.4px;font-size:5.85px;color:#f4f4f4;-webkit-text-stroke:0.25px #f4f4f4;z-index:3;">#</div>
<div class="t" style="left:691px;top:63.4px;font-size:5.85px;color:#f4f4f4;-webkit-text-stroke:0.25px #f4f4f4;z-index:3;">Name</div>
<div class="a" style="left:0;top:59px;width:900px;height:518.7px;overflow:hidden;"><div class="a" style="left:0;top:-59px;">
<div class="row" style="top:68.90px"><i></i><b></b><u></u><s>R7</s><em>DOORGlas_Main-French Door Glass Close 06_AKB00M_Doors</em></div>
<div class="row" style="top:81.40px"><i></i><b></b><u></u><s>R8</s><em>DOORGlas_Main-French Door Glass CloseQuietly 01_AKB00M_Doors</em></div>
<div class="row" style="top:93.90px"><i></i><b></b><u></u><s>R9</s><em>DOORGlas_Main-French Door Glass CloseQuietly 02_AKB00M_Doors</em></div>
<div class="row" style="top:106.40px"><i></i><b></b><u></u><s>R10</s><em>DOORGlas_Main-French Door Glass CloseQuietly 03_AKB00M_Doors</em></div>
<div class="row" style="top:118.90px"><i></i><b></b><u></u><s>R11</s><em>DOORGlas_Main-French Door Glass CloseQuietly 04_AKB00M_Doors</em></div>
<div class="row" style="top:131.40px"><i></i><b></b><u></u><s>R12</s><em>DOORGlas_Main-French Door Glass CloseQuietly 05_AKB00M_Doors</em></div>
<div class="row" style="top:143.90px"><i></i><b></b><u></u><s>R13</s><em>DOORGlas_Main-French Door Glass CloseQuietly 06_AKB00M_Doors</em></div>
<div class="row" style="top:156.40px"><i></i><b></b><u></u><s>R14</s><em>DOORGlas_Main-French Door Glass Open 01_AKB00M_Doors</em></div>
<div class="row" style="top:168.90px"><i></i><b></b><u></u><s>R15</s><em>DOORGlas_Main-French Door Glass Open 02_AKB00M_Doors</em></div>
<div class="row" style="top:181.40px"><i></i><b></b><u></u><s>R16</s><em>DOORGlas_Main-French Door Glass Open 03_AKB00M_Doors</em></div>
<div class="row" style="top:193.90px"><i></i><b></b><u></u><s>R17</s><em>DOORGlas_Main-French Door Glass Open 04_AKB00M_Doors</em></div>
<div class="row" style="top:206.40px"><i></i><b></b><u></u><s>R18</s><em>DOORGlas_Main-French Door Glass Open 05_AKB00M_Doors</em></div>
<div class="row" style="top:218.90px"><i></i><b></b><u></u><s>R19</s><em>DOORGlas_Main-French Door Glass Open 06_AKB00M_Doors</em></div>
<div class="row" style="top:231.40px"><i></i><b></b><u></u><s>R20</s><em>DOORGlas_Main-French Door Glass OpenBurst 01_AKB00M_Doors</em></div>
<div class="row" style="top:243.90px"><i></i><b></b><u></u><s>R21</s><em>DOORGlas_Main-French Door Glass OpenBurst 02_AKB00M_Doors</em></div>
<div class="row" style="top:256.40px"><i></i><b></b><u></u><s>R22</s><em>DOORGlas_Main-French Door Glass OpenBurst 03_AKB00M_Doors</em></div>
<div class="row" style="top:268.90px"><i></i><b></b><u></u><s>R23</s><em>DOORGlas_Main-French Door Glass OpenBurst 04_AKB00M_Doors</em></div>
<div class="row" style="top:281.40px"><i></i><b></b><u></u><s>R24</s><em>DOORGlas_Main-French Door Glass OpenBurst 05_AKB00M_Doors</em></div>
<div class="row" style="top:293.90px"><i></i><b></b><u></u><s>R25</s><em>DOORGlas_Main-French Door Glass OpenBurst 06_AKB00M_Doors</em></div>
<div class="row" style="top:306.40px"><i></i><b></b><u></u><s>R26</s><em>DOORGlas_Main-French Door Glass OpenQuietly 01_AKB00M_Doors</em></div>
<div class="row" style="top:318.90px"><i></i><b></b><u></u><s>R27</s><em>DOORGlas_Main-French Door Glass OpenQuietly 02_AKB00M_Doors</em></div>
<div class="row" style="top:331.40px"><i></i><b></b><u></u><s>R28</s><em>DOORGlas_Main-French Door Glass OpenQuietly 03_AKB00M_Doors</em></div>
<div class="row" style="top:343.90px"><i></i><b></b><u></u><s>R29</s><em>DOORGlas_Main-French Door Glass OpenQuietly 04_AKB00M_Doors</em></div>
<div class="row" style="top:356.40px"><i></i><b></b><u></u><s>R30</s><em>DOORGlas_Main-French Door Glass OpenQuietly 05_AKB00M_Doors</em></div>
<div class="row" style="top:368.90px"><i></i><b></b><u></u><s>R31</s><em>DOORGlas_Main-French Door Glass OpenQuietly 06_AKB00M_Doors</em></div>
<div class="row" style="top:381.40px"><i></i><b></b><u></u><s>R32</s><em>DOORGlas_Main-Glass Door Glass Close 01_AKB00M_Doors</em></div>
<div class="row" style="top:393.90px"><i></i><b></b><u></u><s>R33</s><em>DOORGlas_Main-Glass Door Glass Close 02_AKB00M_Doors</em></div>
<div class="row" style="top:406.40px"><i></i><b></b><u></u><s>R34</s><em>DOORGlas_Main-Glass Door Glass Close 03_AKB00M_Doors</em></div>
<div class="row" style="top:418.90px"><i></i><b></b><u></u><s>R35</s><em>DOORGlas_Main-Glass Door Glass Close 04_AKB00M_Doors</em></div>
<div class="row" style="top:431.40px"><i></i><b></b><u></u><s>R36</s><em>DOORGlas_Main-Glass Door Glass Close 05_AKB00M_Doors</em></div>
<div class="row" style="top:443.90px"><i></i><b></b><u></u><s>R37</s><em>DOORGlas_Main-Glass Door Glass Close 06_AKB00M_Doors</em></div>
<div class="row" style="top:456.40px"><i></i><b></b><u></u><s>R38</s><em>DOORGlas_Main-Glass Door Glass CloseQuietly 01_AKB00M_Doors</em></div>
<div class="row" style="top:468.90px"><i></i><b></b><u></u><s>R39</s><em>DOORGlas_Main-Glass Door Glass CloseQuietly 02_AKB00M_Doors</em></div>
<div class="row" style="top:481.40px"><i></i><b></b><u></u><s>R40</s><em>DOORGlas_Main-Glass Door Glass CloseQuietly 03_AKB00M_Doors</em></div>
<div class="row" style="top:493.90px"><i></i><b></b><u></u><s>R41</s><em>DOORGlas_Main-Glass Door Glass CloseQuietly 04_AKB00M_Doors</em></div>
<div class="row" style="top:506.40px"><i></i><b></b><u></u><s>R42</s><em>DOORGlas_Main-Glass Door Glass CloseQuietly 05_AKB00M_Doors</em></div>
<div class="row" style="top:518.90px"><i></i><b></b><u></u><s>R43</s><em>DOORGlas_Main-Glass Door Glass CloseQuietly 06_AKB00M_Doors</em></div>
<div class="row" style="top:531.40px"><i></i><b></b><u></u><s>R44</s><em>DOORGlas_Main-Glass Door Glass Open 01_AKB00M_Doors</em></div>
<div class="row" style="top:543.90px"><i></i><b></b><u></u><s>R45</s><em>DOORGlas_Main-Glass Door Glass Open 02_AKB00M_Doors</em></div>
<div class="row" style="top:556.40px"><i></i><b></b><u></u><s>R46</s><em>DOORGlas_Main-Glass Door Glass Open 03_AKB00M_Doors</em></div>
<div class="row" style="top:568.90px"><i></i><b></b><u></u><s>R47</s><em>DOORGlas_Main-Glass Door Glass Open 04_AKB00M_Doors</em></div>
</div></div>
<div class="a" style="left:0;top:580px;width:900px;height:2px;background:#3d3d3d;"></div>
<svg class="a" style="left:889px;top:455px" width="11" height="127"><path d="M3 8L11 5.5V38.5L3 42z" fill="#363636"/><path d="M3 45.5L6 41.5H11V119L3 123.5z" fill="#8d9b98"/><path d="M6.2 10.5h2.6M6.2 12h2.6M6.2 13.5h2.6" stroke="#666" stroke-width="0.5"/><path d="M6.2 45h2.6M6.2 46.5h2.6M6.2 48h2.6" stroke="#5a6663" stroke-width="0.5"/><text transform="translate(9.2,36.2) rotate(-90)" font-size="5.2" fill="#9c9c9c" textLength="19.5" lengthAdjust="spacingAndGlyphs" font-family="Liberation Sans, sans-serif">Actions</text><text transform="translate(9.3,119.2) rotate(-90)" font-size="5.7" fill="#1e1e1e" font-weight="bold" textLength="65" lengthAdjust="spacingAndGlyphs" font-family="Liberation Sans, sans-serif">Region/Marker Manager</text></svg>
</div></body></html>
